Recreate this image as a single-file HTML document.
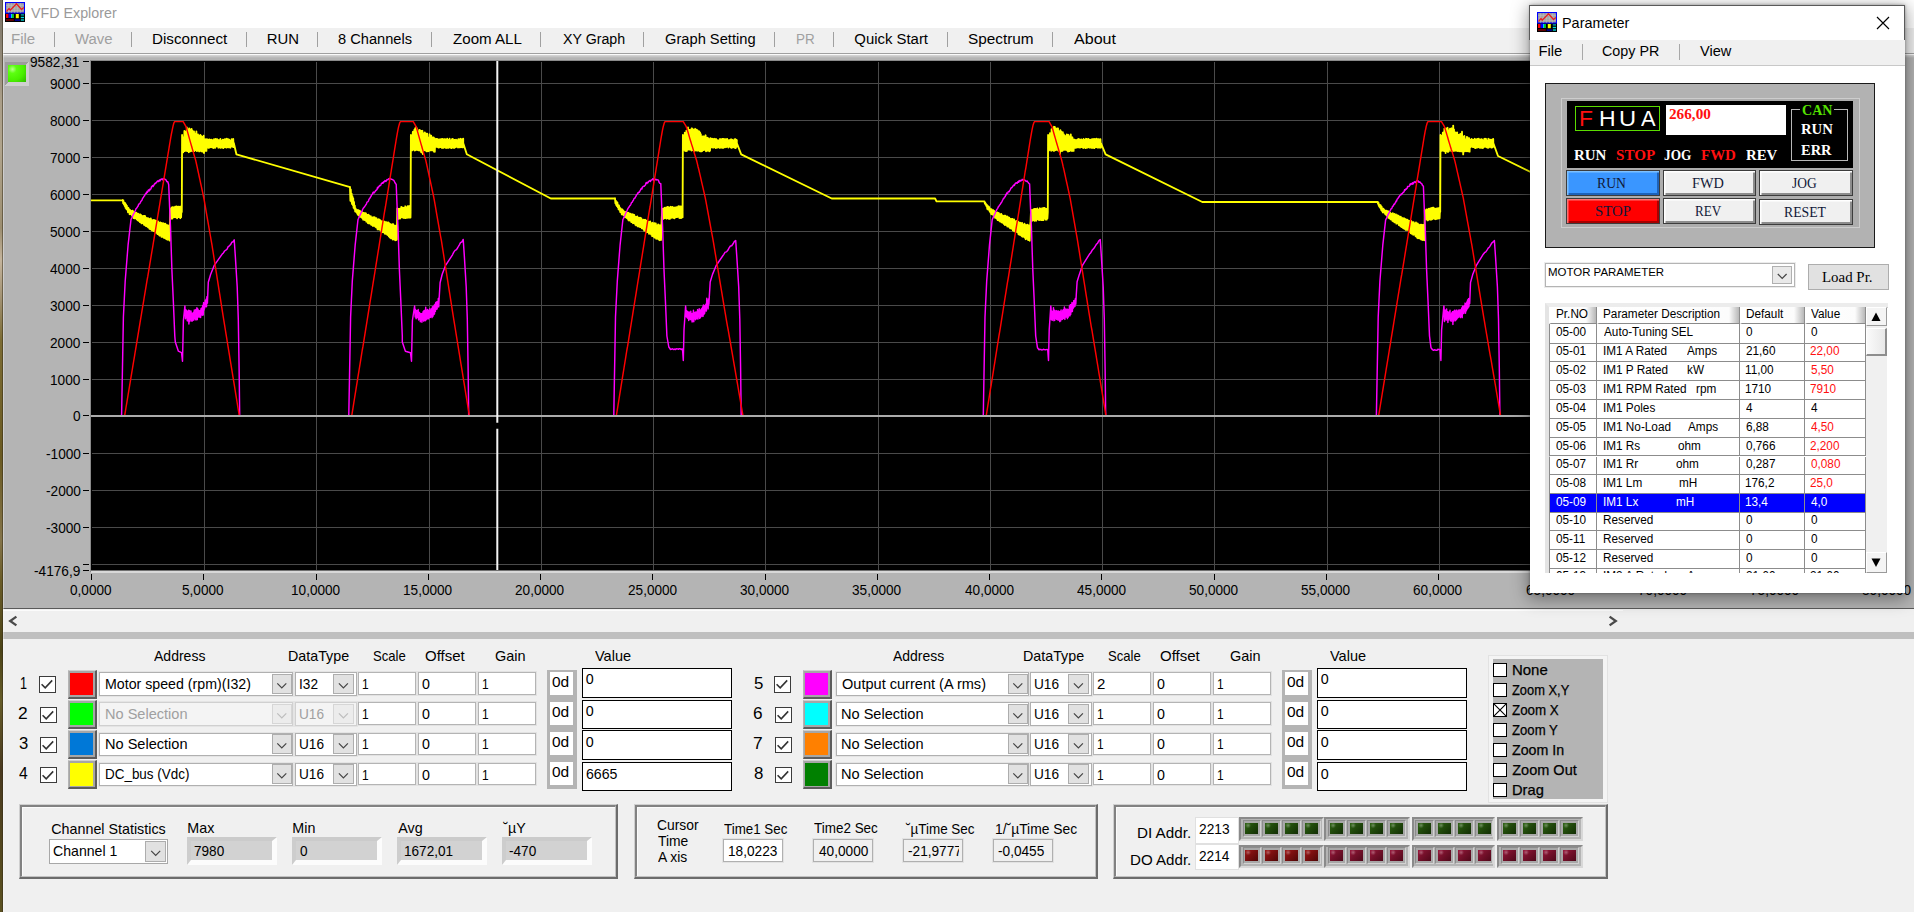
<!DOCTYPE html><html><head><meta charset="utf-8"><title>VFD Explorer</title><style>
html,body{margin:0;padding:0}
body{width:1914px;height:912px;overflow:hidden;position:relative;background:#f0f0f0;font-family:"Liberation Sans",sans-serif}
.b{position:absolute;box-sizing:border-box;display:block}
.t{position:absolute;white-space:pre;transform-origin:0 50%;display:block}
.cb{background:#fff;border:1px solid #333}
.dd{background:#e1e1e1;border:1px solid #adadad}
.fld{background:#fff;border:1px solid #b8b8b8;box-shadow:0 0 0 1px #e6e6e6}
</style></head><body>
<div class="b" style="left:0.00px;top:0.00px;width:1914.00px;height:28.00px;background:#fff"></div>
<svg class="b" style="left:5px;top:2px" width="20" height="20" viewBox="0 0 20 20"><rect width="20" height="20" fill="#000"/><rect x="0.5" y="0.5" width="19" height="10.5" fill="#a4a4a4" stroke="#0000ff" stroke-width="1.2"/><path d="M1 3.5H19M1 6H19M1 8.5H19M3.5 1V11M6.5 1V11M9.5 1V11M12.5 1V11M15.5 1V11" stroke="#c4c4c4" stroke-width="0.5" opacity="0.8"/><path d="M1.5 9.5L4 6.5L5.2 8.2L11.5 1.8L16.5 7.5L18.8 5.5" fill="none" stroke="#e82020" stroke-width="1.3"/><rect x="1" y="12" width="2.6" height="4" fill="#f00"/><rect x="3.6" y="12" width="2.4" height="4" fill="#00f"/><rect x="6" y="12" width="1.2" height="4" fill="#0cf"/><rect x="7.2" y="12" width="1.6" height="4" fill="#0e3"/><rect x="10.8" y="12" width="3" height="4.2" fill="#ff0"/><rect x="15.8" y="12.2" width="3.2" height="1.4" fill="#0aa"/><rect x="15.8" y="14.8" width="3.2" height="1.4" fill="#0dd"/><rect x="15.8" y="17.2" width="3.2" height="1.6" fill="#0bb"/><rect x="1" y="17.2" width="7.8" height="1.6" fill="#700"/><rect x="9.8" y="17.4" width="5.2" height="1.4" fill="#00a"/></svg>
<span class="t" style="left:30.50px;top:6.17px;font:normal 14.80px/14.80px 'Liberation Sans',sans-serif;color:#9a9a9a;transform:scaleX(0.9644);">VFD Explorer</span>
<div class="b" style="left:0.00px;top:28.00px;width:1914.00px;height:25.00px;background:#f0f0f0"></div>
<span class="t" style="left:10.80px;top:32.12px;font:normal 14.90px/14.90px 'Liberation Sans',sans-serif;color:#a0a0a0;transform:scaleX(1.0090);">File</span>
<span class="t" style="left:75.00px;top:32.12px;font:normal 14.90px/14.90px 'Liberation Sans',sans-serif;color:#a0a0a0;">Wave</span>
<span class="t" style="left:151.78px;top:32.12px;font:normal 14.90px/14.90px 'Liberation Sans',sans-serif;color:#000;transform:scaleX(1.0209);">Disconnect</span>
<span class="t" style="left:266.81px;top:32.12px;font:normal 14.90px/14.90px 'Liberation Sans',sans-serif;color:#000;">RUN</span>
<span class="t" style="left:338.41px;top:32.12px;font:normal 14.90px/14.90px 'Liberation Sans',sans-serif;color:#000;transform:scaleX(0.9828);">8 Channels</span>
<span class="t" style="left:452.55px;top:32.12px;font:normal 14.90px/14.90px 'Liberation Sans',sans-serif;color:#000;transform:scaleX(1.0153);">Zoom ALL</span>
<span class="t" style="left:562.72px;top:32.12px;font:normal 14.90px/14.90px 'Liberation Sans',sans-serif;color:#000;transform:scaleX(0.9543);">XY Graph</span>
<span class="t" style="left:665.27px;top:32.12px;font:normal 14.90px/14.90px 'Liberation Sans',sans-serif;color:#000;transform:scaleX(0.9857);">Graph Setting</span>
<span class="t" style="left:795.92px;top:32.12px;font:normal 14.90px/14.90px 'Liberation Sans',sans-serif;color:#a0a0a0;transform:scaleX(0.9019);">PR</span>
<span class="t" style="left:854.33px;top:32.12px;font:normal 14.90px/14.90px 'Liberation Sans',sans-serif;color:#000;">Quick Start</span>
<span class="t" style="left:968.31px;top:32.12px;font:normal 14.90px/14.90px 'Liberation Sans',sans-serif;color:#000;transform:scaleX(1.0300);">Spectrum</span>
<span class="t" style="left:1074.00px;top:32.12px;font:normal 14.90px/14.90px 'Liberation Sans',sans-serif;color:#000;transform:scaleX(1.0800);">About</span>
<div class="b" style="left:54.00px;top:31.50px;width:1.20px;height:15.00px;background:#a0a0a0"></div>
<div class="b" style="left:131.00px;top:31.50px;width:1.20px;height:15.00px;background:#a0a0a0"></div>
<div class="b" style="left:246.00px;top:31.50px;width:1.20px;height:15.00px;background:#a0a0a0"></div>
<div class="b" style="left:317.00px;top:31.50px;width:1.20px;height:15.00px;background:#a0a0a0"></div>
<div class="b" style="left:431.00px;top:31.50px;width:1.20px;height:15.00px;background:#a0a0a0"></div>
<div class="b" style="left:540.00px;top:31.50px;width:1.20px;height:15.00px;background:#a0a0a0"></div>
<div class="b" style="left:643.00px;top:31.50px;width:1.20px;height:15.00px;background:#a0a0a0"></div>
<div class="b" style="left:774.00px;top:31.50px;width:1.20px;height:15.00px;background:#a0a0a0"></div>
<div class="b" style="left:833.00px;top:31.50px;width:1.20px;height:15.00px;background:#a0a0a0"></div>
<div class="b" style="left:947.00px;top:31.50px;width:1.20px;height:15.00px;background:#a0a0a0"></div>
<div class="b" style="left:1052.00px;top:31.50px;width:1.20px;height:15.00px;background:#a0a0a0"></div>
<div class="b" style="left:0.00px;top:53.00px;width:1914.00px;height:1.00px;background:#a0a0a0"></div>
<div class="b" style="left:0.00px;top:54.00px;width:1914.00px;height:1.00px;background:#fafafa"></div>
<div class="b" style="left:0.00px;top:55.00px;width:1914.00px;height:554.00px;background:#b4b4b4"></div>
<div class="b" style="left:0.00px;top:55.00px;width:1914.00px;height:3.00px;background:linear-gradient(#d8d8d8,#b4b4b4)"></div>
<div class="b" style="left:0.00px;top:608.00px;width:1914.00px;height:1.00px;background:#5a5a5a"></div>
<div class="b" style="left:5.00px;top:62.00px;width:24.00px;height:24.00px;background:linear-gradient(135deg,#9c9c9c 0,#9c9c9c 50%,#cfcfcf 50%,#cfcfcf 100%)"></div>
<div class="b" style="left:8.00px;top:65.00px;width:18.00px;height:17.00px;background:radial-gradient(circle at 25% 25%,#b8ff90 0,#5cff10 22%,#4af000 60%,#2fb800 100%)"></div>
<svg class="b" style="left:0;top:0" width="1914" height="912" viewBox="0 0 1914 912">
<defs><clipPath id="pc"><rect x="91" y="61" width="1797" height="509"/></clipPath><clipPath id="pt"><rect x="91" y="61" width="1797" height="353.9"/></clipPath></defs>
<rect x="91" y="61" width="1797" height="509" fill="#000"/>
<g clip-path="url(#pc)" fill="none" shape-rendering="crispEdges">
<path d="M204 61V570M316 61V570M429 61V570M541 61V570M653 61V570M765 61V570M878 61V570M990 61V570M1102 61V570M1214 61V570M1327 61V570M1439 61V570M1551 61V570M1663 61V570M1776 61V570M1888 61V570M91 83H1888M91 120H1888M91 157H1888M91 194H1888M91 231H1888M91 268H1888M91 305H1888M91 342H1888M91 379H1888M91 453H1888M91 490H1888M91 527H1888M91 564H1888" stroke="#4a4a4a" stroke-width="1" transform="translate(0.5,0.5)"/>
</g>
<g clip-path="url(#pt)" fill="none" stroke-linejoin="round">
<polyline points="91.0,200.3 123.4,200.3 122.8,200.3 122.8,200.0 123.2,203.3 123.6,201.7 124.0,204.5 124.4,202.8 124.8,206.2 125.2,203.2 125.6,207.8 126.0,204.4 126.4,209.0 126.8,205.6 127.2,209.7 127.6,207.4 128.0,212.2 128.4,208.0 128.8,212.2 129.2,209.4 129.6,214.2 130.0,209.8 130.4,214.1 130.8,211.0 131.2,214.3 131.6,211.3 132.0,215.5 132.4,210.7 132.8,216.0 133.2,211.5 133.6,218.0 134.0,211.8 134.4,218.2 134.8,212.8 135.2,218.4 135.6,213.0 136.0,218.4 136.4,212.6 136.8,219.2 137.2,213.9 137.6,220.1 138.0,213.6 138.4,220.8 138.8,214.2 139.2,220.9 139.6,215.0 140.0,222.1 140.4,214.5 140.8,222.4 141.2,215.2 141.6,223.4 142.0,215.9 142.4,223.0 142.8,216.6 143.2,223.3 143.6,216.0 144.0,224.8 144.4,215.9 144.8,225.0 145.2,216.1 145.6,225.8 146.0,217.6 146.4,226.2 146.8,218.1 147.2,226.3 147.6,218.2 148.0,227.2 148.4,218.3 148.8,227.6 149.2,219.1 149.6,228.9 150.0,218.9 150.4,229.0 150.8,218.5 151.2,229.5 151.6,219.8 152.0,230.5 152.4,220.5 152.8,229.9 153.2,220.1 153.6,231.1 154.0,219.9 154.4,231.3 154.8,220.4 155.2,231.3 155.6,220.6 156.0,232.8 156.4,221.0 156.8,232.6 157.2,221.7 157.6,234.1 158.0,221.4 158.4,234.0 158.8,222.5 159.2,235.2 159.6,223.1 160.0,235.7 160.4,222.5 160.8,235.6 161.2,222.9 161.6,236.9 162.0,224.2 162.4,236.2 162.8,223.2 163.2,236.9 163.6,223.5 164.0,237.9 164.4,224.4 164.8,238.0 165.2,223.7 165.6,238.5 166.0,224.5 166.4,239.0 166.8,225.7 167.2,239.5 167.6,225.2 168.0,239.7 168.4,225.6 168.8,239.0 169.2,226.2 169.6,240.5 170.3,209.2 170.7,219.0 171.1,208.1 171.5,218.1 171.9,207.4 172.3,218.5 172.7,207.2 173.1,217.2 173.5,207.3 173.9,217.3 174.3,207.5 174.7,217.0 175.1,206.6 175.5,217.1 175.9,206.7 176.3,217.4 176.7,206.4 177.1,218.3 177.5,207.5 177.9,216.8 178.3,206.6 178.7,217.1 179.1,206.7 179.5,216.5 179.9,207.5 180.3,218.2 180.7,206.6 181.1,217.1 181.5,205.7 181.8,212.0 182.1,135.0 182.4,149.1 182.8,137.2 183.2,152.3 183.6,137.1 184.0,149.3 184.4,131.0 184.8,151.1 185.2,132.5 185.6,149.8 186.0,131.4 186.4,150.7 186.8,127.5 187.2,151.1 187.6,130.4 188.0,150.7 188.4,129.3 188.8,152.2 189.2,128.5 189.6,150.6 190.0,129.5 190.4,151.3 190.8,129.4 191.2,149.7 191.6,128.9 192.0,151.1 192.4,130.5 192.8,150.9 193.2,131.8 193.6,150.9 194.0,131.5 194.4,151.0 194.8,133.4 195.2,150.2 195.6,134.6 196.0,149.7 196.4,131.5 196.8,151.1 197.2,135.0 197.6,150.8 198.0,134.4 198.4,149.5 198.8,135.4 199.2,151.4 199.6,136.9 200.0,149.9 200.4,134.9 200.8,150.7 201.2,136.0 201.6,151.4 202.0,136.7 202.4,151.5 202.8,139.3 203.2,150.7 203.6,135.7 204.0,153.0 204.4,139.7 204.8,150.6 205.2,139.1 205.6,150.8 206.0,140.6 206.4,150.9 206.8,139.2 207.2,147.7 207.6,139.6 208.0,147.3 208.4,140.1 208.8,147.9 209.2,139.5 209.6,147.4 210.0,139.6 210.4,147.2 210.8,139.9 211.2,147.1 211.6,139.7 212.0,147.2 212.4,140.4 212.8,147.6 213.2,140.3 213.6,148.0 214.0,139.2 214.4,147.3 214.8,140.4 215.2,147.8 215.6,138.9 216.0,146.5 216.4,139.5 216.8,146.4 217.2,139.1 217.6,146.4 218.0,139.9 218.4,147.7 218.8,140.3 219.2,146.6 219.6,140.0 220.0,147.5 220.4,139.0 220.8,147.9 221.2,140.4 221.6,146.7 222.0,140.4 222.4,147.0 222.8,139.6 223.2,148.1 223.6,140.2 224.0,146.6 224.4,139.5 224.8,147.2 225.2,139.3 225.6,146.7 226.0,139.3 226.4,147.6 226.8,138.7 227.2,147.3 227.6,139.5 228.0,146.3 228.4,139.3 228.8,147.4 229.2,139.6 229.6,146.4 230.0,140.5 230.4,147.7 230.8,140.4 231.2,146.5 231.6,139.2 232.0,146.4 232.4,140.1 232.8,146.8 233.2,138.9 233.6,147.1 233.8,143.0 236.4,154.3 349.2,186.9 350.0,186.9 350.0,187.6 350.4,200.6 350.8,189.5 351.2,201.4 351.6,193.6 352.0,203.9 352.4,196.2 352.8,205.0 353.2,198.2 353.6,207.8 354.0,201.8 354.4,208.6 354.8,205.6 355.2,211.4 355.6,208.3 356.0,212.0 356.4,209.8 356.8,212.8 357.2,210.3 357.6,214.2 358.0,210.0 358.4,215.2 358.8,211.5 359.2,215.5 359.6,210.7 360.0,216.7 360.4,211.4 360.8,216.9 361.2,211.8 361.6,217.3 362.0,212.2 362.4,218.3 362.8,212.7 363.2,219.6 363.6,213.0 364.0,219.7 364.4,213.1 364.8,220.0 365.2,213.2 365.6,220.3 366.0,213.5 366.4,221.7 366.8,214.7 367.2,221.3 367.6,214.9 368.0,223.1 368.4,214.6 368.8,223.4 369.2,215.4 369.6,223.4 370.0,216.4 370.4,223.8 370.8,216.2 371.2,224.8 371.6,217.3 372.0,224.8 372.4,217.4 372.8,225.9 373.2,217.4 373.6,225.9 374.0,217.3 374.4,225.9 374.8,217.3 375.2,226.5 375.6,218.6 376.0,227.3 376.4,218.1 376.8,227.6 377.2,219.5 377.6,229.4 378.0,219.6 378.4,229.0 378.8,219.2 379.2,229.5 379.6,219.9 380.0,229.8 380.4,220.3 380.8,230.5 381.2,221.4 381.6,232.2 382.0,221.1 382.4,231.6 382.8,222.1 383.2,232.2 383.6,221.4 384.0,232.3 384.4,221.7 384.8,233.6 385.2,222.2 385.6,233.7 386.0,222.4 386.4,233.9 386.8,222.3 387.2,234.6 387.6,222.8 388.0,235.1 388.4,222.5 388.8,236.1 389.2,223.1 389.6,237.1 390.0,223.8 390.4,237.9 390.8,224.3 391.2,238.4 391.6,224.9 392.0,238.3 392.4,224.3 392.8,239.5 393.2,224.2 393.6,239.3 394.0,225.3 394.4,238.5 394.8,225.8 395.2,240.2 395.6,225.6 396.0,240.2 396.4,226.1 396.8,239.5 397.3,208.5 397.7,218.4 398.1,209.0 398.5,218.9 398.9,208.9 399.3,218.4 399.7,208.9 400.1,218.5 400.5,208.4 400.9,217.5 401.3,206.9 401.7,217.2 402.1,207.5 402.5,217.1 402.9,208.3 403.3,217.9 403.7,207.8 404.1,218.0 404.5,207.8 404.9,217.6 405.3,206.3 405.7,218.1 406.1,207.7 406.5,217.5 406.9,207.1 407.3,217.7 407.7,206.1 408.1,217.7 408.5,206.3 408.9,216.3 409.3,206.2 409.7,217.6 410.1,206.0 410.5,217.5 410.6,212.0 410.9,135.0 411.2,141.9 411.6,149.7 412.0,137.3 412.4,150.3 412.8,131.9 413.2,149.5 413.6,131.4 414.0,149.0 414.4,129.7 414.8,150.5 415.2,128.3 415.6,150.0 416.0,127.2 416.4,149.5 416.8,128.1 417.2,150.1 417.6,131.5 418.0,149.7 418.4,131.7 418.8,150.4 419.2,130.0 419.6,149.5 420.0,130.2 420.4,150.7 420.8,132.3 421.2,152.3 421.6,131.0 422.0,149.9 422.4,130.8 422.8,154.1 423.2,133.1 423.6,149.6 424.0,133.4 424.4,150.0 424.8,132.5 425.2,150.6 425.6,133.2 426.0,149.5 426.4,135.6 426.8,151.4 427.2,133.6 427.6,149.9 428.0,137.3 428.4,151.2 428.8,137.7 429.2,150.7 429.6,134.3 430.0,150.5 430.4,137.6 430.8,149.7 431.2,135.7 431.6,150.3 432.0,139.0 432.4,150.2 432.8,137.5 433.2,150.5 433.6,137.4 434.0,151.6 434.4,138.1 434.8,151.8 435.2,139.0 435.6,146.6 436.0,138.9 436.4,146.9 436.8,138.9 437.2,146.7 437.6,139.2 438.0,147.3 438.4,140.3 438.8,147.6 439.2,139.4 439.6,147.0 440.0,139.6 440.4,147.0 440.8,139.3 441.2,146.4 441.6,139.2 442.0,148.0 442.4,138.9 442.8,147.2 443.2,139.8 443.6,147.9 444.0,139.1 444.4,146.8 444.8,139.1 445.2,147.0 445.6,139.5 446.0,148.0 446.4,140.2 446.8,147.9 447.2,138.7 447.6,146.4 448.0,140.0 448.4,147.9 448.8,139.6 449.2,147.4 449.6,138.7 450.0,147.0 450.4,140.4 450.8,147.8 451.2,140.2 451.6,148.1 452.0,139.1 452.4,146.5 452.8,139.0 453.2,147.2 453.6,139.9 454.0,148.0 454.4,140.0 454.8,147.5 455.2,140.1 455.6,147.1 456.0,139.7 456.4,146.4 456.8,140.1 457.2,146.7 457.6,140.4 458.0,147.5 458.4,139.2 458.8,146.5 459.2,139.2 459.6,147.4 460.0,140.0 460.4,146.5 460.8,138.8 461.2,147.2 461.6,139.7 462.0,147.0 462.4,139.1 462.8,147.4 463.2,138.7 463.2,143.0 466.8,154.3 550.8,198.5 614.2,198.5 615.0,198.5 615.0,198.2 615.4,203.3 615.8,200.7 616.2,205.0 616.6,202.0 617.0,206.1 617.4,202.5 617.8,207.1 618.2,205.1 618.6,209.3 619.0,205.5 619.4,209.6 619.8,207.3 620.2,212.0 620.6,208.5 621.0,212.4 621.4,209.5 621.8,214.3 622.2,209.3 622.6,213.6 623.0,210.1 623.4,215.1 623.8,211.2 624.2,215.5 624.6,211.9 625.0,217.2 625.4,211.9 625.8,217.1 626.2,213.1 626.6,217.9 627.0,213.2 627.4,218.3 627.8,212.6 628.2,219.7 628.6,213.0 629.0,220.5 629.4,213.7 629.8,219.8 630.2,213.6 630.6,220.7 631.0,214.6 631.4,222.1 631.8,214.1 632.2,221.8 632.6,214.5 633.0,223.2 633.4,214.7 633.8,222.3 634.2,214.9 634.6,223.4 635.0,216.6 635.4,224.7 635.8,216.7 636.2,225.4 636.6,217.3 637.0,224.9 637.4,216.5 637.8,226.4 638.2,217.7 638.6,225.5 639.0,217.9 639.4,226.6 639.8,217.8 640.2,227.1 640.6,217.8 641.0,227.1 641.4,218.4 641.8,228.2 642.2,219.8 642.6,228.4 643.0,220.2 643.4,229.0 643.8,219.6 644.2,230.6 644.6,220.6 645.0,230.5 645.4,219.8 645.8,231.1 646.2,220.6 646.6,232.3 647.0,220.7 647.4,232.0 647.8,222.1 648.2,232.0 648.6,221.6 649.0,233.8 649.4,222.4 649.8,233.1 650.2,221.5 650.6,233.7 651.0,223.2 651.4,234.6 651.8,223.2 652.2,236.2 652.6,222.8 653.0,235.7 653.4,224.1 653.8,236.8 654.2,223.2 654.6,237.6 655.0,223.6 655.4,237.4 655.8,223.4 656.2,238.7 656.6,225.1 657.0,238.8 657.4,225.4 657.8,238.1 658.2,224.5 658.6,239.1 659.0,225.9 659.4,240.2 659.8,225.2 660.2,239.3 660.6,225.4 661.0,240.0 661.4,226.4 661.8,217.8 662.2,209.0 662.6,218.9 663.0,209.0 663.4,218.9 663.8,208.5 664.2,218.0 664.6,207.8 665.0,218.0 665.4,208.7 665.8,217.4 666.2,207.4 666.6,218.6 667.0,207.5 667.4,217.2 667.8,207.0 668.2,218.1 668.6,207.5 669.0,218.9 669.4,208.5 669.8,218.9 670.2,207.2 670.6,217.0 671.0,206.8 671.4,217.8 671.8,207.9 672.2,217.6 672.6,206.9 673.0,217.5 673.4,207.6 673.8,218.0 674.2,207.8 674.6,218.3 675.0,207.5 675.4,216.8 675.8,207.8 676.2,217.0 676.6,207.2 677.0,217.1 677.4,207.5 677.8,216.7 678.2,206.4 678.6,216.8 679.0,206.1 679.4,218.0 679.8,206.9 680.2,216.8 680.6,206.5 681.0,218.1 681.4,206.6 681.8,216.5 682.2,207.2 682.6,217.3 682.6,212.0 682.9,135.0 683.2,142.3 683.6,149.9 684.0,138.7 684.4,149.0 684.8,132.6 685.2,151.0 685.6,134.9 686.0,150.8 686.4,130.6 686.8,151.0 687.2,130.8 687.6,149.5 688.0,127.4 688.4,149.6 688.8,129.6 689.2,149.1 689.6,129.9 690.0,149.8 690.4,130.7 690.8,149.3 691.2,129.1 691.6,150.5 692.0,128.3 692.4,150.0 692.8,129.1 693.2,149.9 693.6,129.6 694.0,151.0 694.4,130.0 694.8,150.8 695.2,128.8 695.6,150.2 696.0,131.1 696.4,150.3 696.8,129.7 697.2,150.7 697.6,130.5 698.0,150.1 698.4,131.2 698.8,150.5 699.2,131.4 699.6,151.1 700.0,132.3 700.4,151.4 700.8,134.1 701.2,151.4 701.6,136.5 702.0,151.2 702.4,136.5 702.8,150.3 703.2,137.2 703.6,150.0 704.0,136.3 704.4,149.8 704.8,137.7 705.2,149.6 705.6,135.3 706.0,151.3 706.4,138.0 706.8,150.9 707.2,137.7 707.6,150.5 708.0,138.2 708.4,149.7 708.8,138.8 709.2,151.3 709.6,139.1 710.0,150.7 710.4,138.1 710.8,146.5 711.2,139.5 711.6,147.2 712.0,138.8 712.4,147.4 712.8,138.8 713.2,147.6 713.6,140.1 714.0,147.2 714.4,138.8 714.8,147.2 715.2,139.4 715.6,148.0 716.0,138.9 716.4,147.8 716.8,140.5 717.2,147.6 717.6,140.2 718.0,146.6 718.4,140.5 718.8,147.2 719.2,140.4 719.6,147.9 720.0,139.0 720.4,147.7 720.8,140.4 721.2,146.4 721.6,139.3 722.0,147.7 722.4,139.0 722.8,147.9 723.2,139.2 723.6,147.8 724.0,139.0 724.4,147.2 724.8,140.4 725.2,146.7 725.6,139.2 726.0,147.2 726.4,139.3 726.8,146.4 727.2,139.0 727.6,146.6 728.0,140.4 728.4,147.5 728.8,140.3 729.2,146.6 729.6,140.1 730.0,146.5 730.4,139.7 730.8,147.4 731.2,139.3 731.6,147.9 732.0,139.7 732.4,147.3 732.8,140.3 733.2,146.5 733.6,140.5 734.0,147.4 734.4,139.4 734.8,147.7 735.2,139.2 735.6,148.1 736.0,139.7 736.4,146.9 736.8,140.1 736.8,143.0 741.2,154.3 831.7,198.5 935.1,198.5 936.5,201.4 983.3,201.4 984.5,201.4 984.5,201.3 984.9,203.7 985.3,202.9 985.7,204.8 986.1,204.1 986.5,206.4 986.9,204.9 987.3,208.8 987.7,205.9 988.1,209.6 988.5,206.5 988.9,209.9 989.3,207.2 989.7,211.4 990.1,209.0 990.5,212.7 990.9,209.3 991.3,214.3 991.7,209.3 992.1,214.1 992.5,210.7 992.9,214.6 993.3,210.2 993.7,215.9 994.1,210.9 994.5,216.7 994.9,211.6 995.3,217.9 995.7,212.6 996.1,217.8 996.5,213.0 996.9,218.8 997.3,212.5 997.7,220.1 998.1,213.0 998.5,219.4 998.9,213.1 999.3,220.7 999.7,214.7 1000.1,221.5 1000.5,214.3 1000.9,221.2 1001.3,214.0 1001.7,222.4 1002.1,215.2 1002.5,222.4 1002.9,215.7 1003.3,223.1 1003.7,216.5 1004.1,224.1 1004.5,215.7 1004.9,225.0 1005.3,215.7 1005.7,224.9 1006.1,216.6 1006.5,225.0 1006.9,216.4 1007.3,226.4 1007.7,216.7 1008.1,226.6 1008.5,218.5 1008.9,226.5 1009.3,217.7 1009.7,227.8 1010.1,218.6 1010.5,228.4 1010.9,219.4 1011.3,228.2 1011.7,219.0 1012.1,228.9 1012.5,218.9 1012.9,230.4 1013.3,220.4 1013.7,230.7 1014.1,219.5 1014.5,231.4 1014.9,221.1 1015.3,231.4 1015.7,221.4 1016.1,231.9 1016.5,220.9 1016.9,231.9 1017.3,221.2 1017.7,232.4 1018.1,221.7 1018.5,234.1 1018.9,222.5 1019.3,234.8 1019.7,222.8 1020.1,234.4 1020.5,222.8 1020.9,235.3 1021.3,223.5 1021.7,236.0 1022.1,222.9 1022.5,236.7 1022.9,224.3 1023.3,236.6 1023.7,224.4 1024.1,236.9 1024.5,223.7 1024.9,237.8 1025.3,224.8 1025.7,239.2 1026.1,225.0 1026.5,238.5 1026.9,225.5 1027.3,238.8 1027.7,224.7 1028.1,240.0 1028.5,225.5 1028.9,240.0 1029.3,225.8 1029.7,240.7 1030.1,225.7 1030.6,221.0 1031.0,210.6 1031.4,220.9 1031.8,210.0 1032.2,220.6 1032.6,210.2 1033.0,219.7 1033.4,209.4 1033.8,220.2 1034.2,209.0 1034.6,220.8 1035.0,209.1 1035.4,218.9 1035.8,208.9 1036.2,220.7 1036.6,209.3 1037.0,219.0 1037.4,208.5 1037.8,218.7 1038.2,209.8 1038.6,219.9 1039.0,209.7 1039.4,220.0 1039.8,208.3 1040.2,219.6 1040.6,208.8 1041.0,220.0 1041.4,209.7 1041.8,220.1 1042.2,208.1 1042.6,220.0 1043.0,209.7 1043.4,220.1 1043.8,208.0 1044.2,218.5 1044.6,207.9 1045.0,218.1 1045.4,209.3 1045.8,219.6 1046.2,208.8 1046.6,219.6 1047.0,208.7 1047.4,218.4 1047.8,212.0 1048.1,135.0 1048.4,138.1 1048.8,150.5 1049.2,136.1 1049.6,149.0 1050.0,133.1 1050.4,149.8 1050.8,134.7 1051.2,150.8 1051.6,129.1 1052.0,149.9 1052.4,129.1 1052.8,150.2 1053.2,130.4 1053.6,150.8 1054.0,126.8 1054.4,150.7 1054.8,127.0 1055.2,150.2 1055.6,128.1 1056.0,149.9 1056.4,128.7 1056.8,149.8 1057.2,130.9 1057.6,149.4 1058.0,128.3 1058.4,150.7 1058.8,131.2 1059.2,150.1 1059.6,132.8 1060.0,154.1 1060.4,130.2 1060.8,151.2 1061.2,131.4 1061.6,149.8 1062.0,132.6 1062.4,150.9 1062.8,132.2 1063.2,149.7 1063.6,134.1 1064.0,149.8 1064.4,135.2 1064.8,149.7 1065.2,136.2 1065.6,149.8 1066.0,135.9 1066.4,149.8 1066.8,134.4 1067.2,150.6 1067.6,135.3 1068.0,151.6 1068.4,134.8 1068.8,149.8 1069.2,139.3 1069.6,151.1 1070.0,136.2 1070.4,149.8 1070.8,134.5 1071.2,150.5 1071.6,139.4 1072.0,151.0 1072.4,137.3 1072.8,150.5 1073.2,141.2 1073.6,150.9 1074.0,139.5 1074.4,146.7 1074.8,140.0 1075.2,147.9 1075.6,140.1 1076.0,147.6 1076.4,140.2 1076.8,147.5 1077.2,139.9 1077.6,147.1 1078.0,139.3 1078.4,147.4 1078.8,138.9 1079.2,147.1 1079.6,140.1 1080.0,147.6 1080.4,139.8 1080.8,146.8 1081.2,139.5 1081.6,147.1 1082.0,139.8 1082.4,147.0 1082.8,139.9 1083.2,148.0 1083.6,139.0 1084.0,147.5 1084.4,140.1 1084.8,147.0 1085.2,139.6 1085.6,148.1 1086.0,138.8 1086.4,147.3 1086.8,139.0 1087.2,147.7 1087.6,140.4 1088.0,147.2 1088.4,138.9 1088.8,147.3 1089.2,139.7 1089.6,147.6 1090.0,139.6 1090.4,147.5 1090.8,140.2 1091.2,147.2 1091.6,139.4 1092.0,148.0 1092.4,139.1 1092.8,147.5 1093.2,139.4 1093.6,147.7 1094.0,138.9 1094.4,148.1 1094.8,139.3 1095.2,146.4 1095.6,139.2 1096.0,147.0 1096.4,138.7 1096.8,147.1 1097.2,139.5 1097.6,147.6 1098.0,139.3 1098.4,146.8 1098.8,139.1 1099.2,147.6 1099.6,140.4 1100.0,147.2 1100.4,139.1 1100.8,147.7 1100.9,143.0 1105.6,154.3 1202.3,202.0 1376.7,202.0 1377.6,202.0 1377.6,201.8 1378.0,203.9 1378.4,202.4 1378.8,206.0 1379.2,204.5 1379.6,207.0 1380.0,204.9 1380.4,208.2 1380.8,205.5 1381.2,210.0 1381.6,206.7 1382.0,210.8 1382.4,208.4 1382.8,212.3 1383.2,208.7 1383.6,212.4 1384.0,209.3 1384.4,212.9 1384.8,210.3 1385.2,214.1 1385.6,210.8 1386.0,214.7 1386.4,210.6 1386.8,215.5 1387.2,211.2 1387.6,216.2 1388.0,211.1 1388.4,217.9 1388.8,212.0 1389.2,217.7 1389.6,212.3 1390.0,218.6 1390.4,212.9 1390.8,219.4 1391.2,213.6 1391.6,219.5 1392.0,214.3 1392.4,220.8 1392.8,213.2 1393.2,221.3 1393.6,214.9 1394.0,221.8 1394.4,214.0 1394.8,222.4 1395.2,215.1 1395.6,221.6 1396.0,214.5 1396.4,223.6 1396.8,215.8 1397.2,223.1 1397.6,215.3 1398.0,223.4 1398.4,215.8 1398.8,225.0 1399.2,216.3 1399.6,224.5 1400.0,217.5 1400.4,226.1 1400.8,216.7 1401.2,226.8 1401.6,217.8 1402.0,227.1 1402.4,218.2 1402.8,227.8 1403.2,218.7 1403.6,228.3 1404.0,218.1 1404.4,228.6 1404.8,219.0 1405.2,229.2 1405.6,219.2 1406.0,230.0 1406.4,219.8 1406.8,229.5 1407.2,219.6 1407.6,229.8 1408.0,220.4 1408.4,230.2 1408.8,220.7 1409.2,230.9 1409.6,221.1 1410.0,232.0 1410.4,221.5 1410.8,233.1 1411.2,220.9 1411.6,233.7 1412.0,221.9 1412.4,233.8 1412.8,222.4 1413.2,234.8 1413.6,222.2 1414.0,234.6 1414.4,223.5 1414.8,234.6 1415.2,223.2 1415.6,236.1 1416.0,222.5 1416.4,236.6 1416.8,223.8 1417.2,237.7 1417.6,223.5 1418.0,238.3 1418.4,224.1 1418.8,238.1 1419.2,224.9 1419.6,237.7 1420.0,224.9 1420.4,238.9 1420.8,224.6 1421.2,239.6 1421.6,224.8 1422.0,239.3 1422.4,225.3 1422.8,240.0 1423.2,225.0 1423.6,239.7 1424.0,225.5 1424.4,240.2 1424.8,210.3 1425.2,219.2 1425.6,210.2 1426.0,219.4 1426.4,209.5 1426.8,219.0 1427.2,209.4 1427.6,220.4 1428.0,209.6 1428.4,219.9 1428.8,208.8 1429.2,218.9 1429.6,208.6 1430.0,219.3 1430.4,209.2 1430.8,219.7 1431.2,207.9 1431.6,219.5 1432.0,209.5 1432.4,219.0 1432.8,207.7 1433.2,218.5 1433.6,207.6 1434.0,218.2 1434.4,209.3 1434.8,218.9 1435.2,208.7 1435.6,219.2 1436.0,209.1 1436.4,218.8 1436.8,208.4 1437.2,218.7 1437.6,208.4 1438.0,218.6 1438.4,208.3 1438.8,217.8 1439.2,208.2 1439.6,218.2 1440.0,208.3 1440.2,212.0 1440.5,135.0 1440.8,149.1 1441.2,136.8 1441.6,150.9 1442.0,135.6 1442.4,150.6 1442.8,132.8 1443.2,149.9 1443.6,132.3 1444.0,151.0 1444.4,128.7 1444.8,149.3 1445.2,130.5 1445.6,153.0 1446.0,128.4 1446.4,151.0 1446.8,128.8 1447.2,149.3 1447.6,127.8 1448.0,152.1 1448.4,130.2 1448.8,151.2 1449.2,131.2 1449.6,149.2 1450.0,128.6 1450.4,149.6 1450.8,131.2 1451.2,151.0 1451.6,128.3 1452.0,150.7 1452.4,132.4 1452.8,151.3 1453.2,125.6 1453.6,150.6 1454.0,129.4 1454.4,150.8 1454.8,133.3 1455.2,149.4 1455.6,132.4 1456.0,150.7 1456.4,133.8 1456.8,150.7 1457.2,132.5 1457.6,151.0 1458.0,134.6 1458.4,150.0 1458.8,135.9 1459.2,151.2 1459.6,134.7 1460.0,151.2 1460.4,133.8 1460.8,151.3 1461.2,136.0 1461.6,151.4 1462.0,131.7 1462.4,150.1 1462.8,136.5 1463.2,154.4 1463.6,138.1 1464.0,151.4 1464.4,136.0 1464.8,151.3 1465.2,139.3 1465.6,149.8 1466.0,139.2 1466.4,151.2 1466.8,137.0 1467.2,151.1 1467.6,137.3 1468.0,151.2 1468.4,138.9 1468.8,151.4 1469.2,138.2 1469.6,151.6 1470.0,139.6 1470.4,147.2 1470.8,139.8 1471.2,146.6 1471.6,139.0 1472.0,146.6 1472.4,140.0 1472.8,147.0 1473.2,139.7 1473.6,147.0 1474.0,139.6 1474.4,146.6 1474.8,138.8 1475.2,148.1 1475.6,139.4 1476.0,146.5 1476.4,139.8 1476.8,147.7 1477.2,139.0 1477.6,147.4 1478.0,139.3 1478.4,147.2 1478.8,138.7 1479.2,146.4 1479.6,140.5 1480.0,147.9 1480.4,139.6 1480.8,147.3 1481.2,139.2 1481.6,147.7 1482.0,139.5 1482.4,148.0 1482.8,140.1 1483.2,147.8 1483.6,140.4 1484.0,146.8 1484.4,138.8 1484.8,146.7 1485.2,139.0 1485.6,146.5 1486.0,138.8 1486.4,147.3 1486.8,140.3 1487.2,147.1 1487.6,140.4 1488.0,147.9 1488.4,138.8 1488.8,147.4 1489.2,139.4 1489.6,146.5 1490.0,140.4 1490.4,146.8 1490.8,139.7 1491.2,147.5 1491.6,140.4 1492.0,147.5 1492.4,139.4 1492.8,147.1 1493.2,139.0 1493.3,143.0 1498.0,156.0 1560.0,186.5 1620.0,202.0 1760.0,202.0" stroke="#ffff00" stroke-width="1.85"/>
<polyline points="91.0,416.0 120.6,416.0 121.6,415.0 123.4,317.0 125.2,281.0 128.1,244.8 131.0,219.5 131.5,218.5 132.0,217.5 132.5,216.2 133.0,215.1 133.5,214.1 134.0,213.1 134.5,212.3 135.0,211.2 135.5,210.1 136.0,208.7 136.5,208.4 137.0,207.6 137.5,206.8 138.0,206.3 138.5,204.7 139.0,204.0 139.5,203.9 140.0,203.3 140.5,202.3 141.0,201.1 141.5,200.7 142.0,200.1 142.5,198.5 143.0,198.0 143.5,197.1 144.0,196.1 144.5,195.9 145.0,194.6 145.5,194.0 146.0,193.0 146.5,193.4 147.0,191.6 147.5,192.3 148.0,190.8 148.5,190.0 149.0,191.0 149.5,189.2 150.0,189.9 150.5,189.2 151.0,188.7 151.5,186.8 152.0,186.8 152.5,185.6 153.0,186.5 153.5,185.8 154.0,184.9 154.5,184.0 155.0,183.3 155.5,183.6 156.0,182.7 156.5,182.6 157.0,181.5 157.5,181.3 158.0,180.7 158.5,181.6 159.0,181.0 159.5,179.9 160.0,180.9 160.5,179.5 161.0,179.6 161.5,179.0 162.0,179.0 162.5,179.8 163.0,178.7 164.2,178.5 165.1,179.4 166.0,179.9 166.9,181.8 167.8,181.8 168.7,184.7 169.7,208.9 170.5,226.7 171.9,270.0 173.4,302.7 174.8,336.0 175.3,342.0 178.4,351.2 181.5,352.7 182.5,361.2 183.4,320.5 184.9,306.0 185.1,310.7 185.5,318.7 185.9,309.7 186.4,317.6 186.8,310.6 187.2,320.8 187.6,312.1 188.0,320.9 188.5,310.3 188.9,324.1 189.3,310.5 189.7,321.5 190.1,310.9 190.6,319.6 191.0,310.9 191.4,320.9 191.8,313.3 192.2,321.1 192.7,313.3 193.1,320.3 193.5,312.3 193.9,320.0 194.3,310.1 194.8,318.2 195.2,310.1 195.6,319.7 196.0,309.5 196.4,319.7 196.9,307.8 197.3,319.6 197.7,308.7 198.1,316.8 198.5,310.2 199.0,317.1 199.4,311.1 199.8,317.0 200.2,310.4 200.6,317.5 201.1,308.5 201.5,314.7 201.9,308.1 202.3,315.3 202.7,305.4 203.2,315.1 203.6,302.6 204.0,309.9 204.4,303.4 204.8,307.9 205.3,300.4 205.7,306.2 206.1,299.2 206.5,306.8 206.9,296.7 207.4,303.1 208.3,282.2 210.6,274.5 214.4,265.1 222.2,254.1 223.4,252.9 224.6,251.0 225.8,250.2 227.0,249.2 228.2,246.6 229.4,245.8 230.6,244.6 231.8,242.2 233.0,241.8 234.2,239.8 235.3,255.8 237.2,286.8 238.3,319.0 239.1,368.0 239.7,416.0 347.8,416.0 348.8,415.0 350.6,317.0 352.3,281.0 355.2,244.8 358.0,219.5 358.5,218.5 359.0,217.3 359.5,216.3 360.0,215.3 360.5,214.1 361.0,213.0 361.5,212.2 362.0,211.0 362.5,209.7 363.0,208.7 363.5,208.0 364.0,207.3 364.5,206.9 365.0,206.0 365.5,205.4 366.0,204.5 366.5,203.8 367.0,202.1 367.5,201.9 368.0,201.6 368.5,200.8 369.0,199.2 369.5,198.6 370.0,198.1 370.5,197.0 371.0,196.4 371.5,194.9 372.0,194.7 372.5,194.0 373.0,192.5 373.5,192.1 374.0,193.0 374.5,192.1 375.0,191.8 375.5,190.7 376.0,190.5 376.5,190.0 377.0,189.5 377.5,187.4 378.0,187.9 378.5,186.7 379.0,186.8 379.5,185.5 380.0,185.4 380.5,185.6 381.0,184.5 381.5,183.2 382.0,183.2 382.5,182.7 383.0,183.3 383.5,181.8 384.0,181.5 384.5,181.8 385.0,180.6 385.5,181.1 386.0,181.4 386.5,180.3 387.0,179.6 387.5,179.8 388.0,179.7 388.5,178.8 389.0,178.6 389.5,178.4 390.5,178.7 391.3,179.2 392.1,179.4 392.9,179.8 393.8,180.3 394.6,181.9 395.4,183.4 396.2,184.2 397.2,209.0 398.0,226.7 399.4,270.0 400.9,302.7 402.3,336.0 402.3,342.0 405.4,351.2 410.5,352.7 411.5,361.2 412.4,320.5 414.6,306.0 414.8,308.8 415.2,316.9 415.6,309.6 416.1,318.8 416.5,310.7 416.9,317.8 417.3,310.8 417.7,317.5 418.2,309.5 418.6,319.9 419.0,312.1 419.4,319.3 419.8,313.0 420.3,321.8 420.7,313.8 421.1,320.7 421.5,313.8 421.9,322.2 422.4,313.3 422.8,319.7 423.2,311.4 423.6,321.1 424.0,310.7 424.5,320.5 424.9,310.2 425.3,320.8 425.7,307.2 426.1,319.9 426.6,310.7 427.0,318.9 427.4,309.4 427.8,318.7 428.2,310.3 428.7,318.8 429.1,310.2 429.5,317.3 429.9,308.6 430.3,317.4 430.8,310.4 431.2,315.9 431.6,308.7 432.0,317.6 432.4,306.7 432.9,316.5 433.3,306.9 433.7,314.7 434.1,305.3 434.5,314.0 435.0,304.2 435.4,311.4 435.8,302.4 436.2,309.4 436.6,302.0 437.1,309.0 437.5,301.4 437.9,306.6 438.3,298.5 438.7,306.9 439.2,297.5 440.1,282.7 442.2,274.3 445.6,265.3 452.5,254.8 453.8,252.1 455.1,250.4 456.5,249.6 457.8,247.5 459.2,245.1 460.5,242.6 461.9,241.9 463.2,239.4 464.3,255.4 466.2,286.8 467.3,319.0 468.1,368.0 468.7,416.0 612.8,416.0 613.8,415.0 615.5,317.0 617.3,281.0 620.1,244.8 622.9,219.5 623.4,218.5 623.9,217.4 624.4,216.4 624.9,215.3 625.4,214.0 625.9,212.8 626.4,211.8 626.9,210.8 627.4,209.7 627.9,208.6 628.4,207.8 628.9,207.3 629.4,206.5 629.9,205.5 630.4,205.3 630.9,204.2 631.4,202.8 631.9,202.4 632.4,202.0 632.9,200.7 633.4,200.4 633.9,198.7 634.4,198.3 634.9,198.2 635.4,197.1 635.9,196.4 636.4,194.9 636.9,194.6 637.4,193.9 637.9,192.8 638.4,192.9 638.9,192.1 639.4,192.3 639.9,191.0 640.4,190.1 640.9,189.0 641.4,188.5 641.9,189.0 642.4,187.3 642.9,186.7 643.4,186.3 643.9,186.3 644.4,186.3 644.9,185.3 645.4,185.1 645.9,183.2 646.4,182.5 646.9,183.5 647.4,182.3 647.9,182.7 648.4,181.8 648.9,181.1 649.4,181.0 649.9,180.4 650.4,181.5 650.9,180.6 651.4,179.9 651.9,179.8 652.4,179.5 652.9,178.7 653.4,180.0 653.9,179.3 655.1,179.8 655.9,179.2 656.7,179.9 657.5,179.8 658.4,180.2 659.2,182.5 660.0,183.4 660.8,183.7 661.8,209.0 662.6,226.7 664.0,270.0 665.5,302.7 666.9,336.0 668.8,347.0 670.3,349.0 670.3,349.5 671.2,349.4 672.1,348.8 673.0,349.1 673.9,349.6 674.8,349.0 675.7,349.5 676.6,348.7 677.5,348.9 678.4,349.3 679.3,348.7 680.2,348.8 681.1,349.5 682.0,349.0 682.5,349.0 683.3,360.5 684.0,330.0 685.6,306.0 685.8,307.9 686.2,316.8 686.6,310.7 687.1,317.7 687.5,311.4 687.9,318.5 688.3,312.1 688.7,320.5 689.2,311.9 689.6,319.0 690.0,313.1 690.4,319.6 690.8,311.2 691.3,319.8 691.7,313.7 692.1,322.0 692.5,313.5 692.9,321.3 693.4,310.3 693.8,321.7 694.2,312.6 694.6,318.5 695.0,312.2 695.5,319.8 695.9,312.0 696.3,318.1 696.7,312.1 697.1,318.9 697.6,309.6 698.0,319.0 698.4,310.9 698.8,316.7 699.2,308.8 699.7,318.4 700.1,309.5 700.5,317.5 700.9,310.9 701.3,316.2 701.8,308.4 702.2,316.1 702.6,307.1 703.0,316.4 703.4,305.0 703.9,314.5 704.3,306.1 704.7,313.2 705.1,305.2 705.5,310.8 706.0,304.0 706.4,311.1 706.8,298.3 707.2,306.8 707.6,301.0 708.1,308.9 708.5,299.1 708.9,304.2 709.3,296.8 710.2,282.0 712.5,274.4 716.2,265.5 723.8,254.3 725.2,252.1 726.5,251.9 727.8,250.3 729.1,247.9 730.4,246.0 731.7,245.7 733.1,243.8 734.4,241.3 735.7,240.5 736.8,256.5 738.7,286.8 739.8,319.0 740.6,368.0 741.2,416.0 982.3,416.0 983.3,415.0 985.0,317.0 986.7,281.1 989.5,244.9 992.2,219.7 992.7,218.5 993.2,217.4 993.7,216.4 994.2,215.1 994.7,214.3 995.2,213.1 995.7,211.7 996.2,210.9 996.7,209.6 997.2,209.0 997.7,208.3 998.2,207.1 998.7,206.1 999.2,206.1 999.7,204.8 1000.2,204.5 1000.7,203.5 1001.2,202.7 1001.7,202.1 1002.2,201.0 1002.7,200.0 1003.2,198.7 1003.7,198.8 1004.2,197.6 1004.7,196.9 1005.2,196.8 1005.7,194.7 1006.2,194.9 1006.7,193.0 1007.2,193.5 1007.7,193.2 1008.2,191.6 1008.7,191.5 1009.2,191.7 1009.7,190.5 1010.2,189.8 1010.7,188.7 1011.2,187.8 1011.7,187.7 1012.2,187.2 1012.7,186.3 1013.2,185.9 1013.7,185.0 1014.2,185.5 1014.7,184.8 1015.2,183.5 1015.7,183.0 1016.2,183.2 1016.7,182.8 1017.2,183.3 1017.7,182.0 1018.2,181.5 1018.7,182.3 1019.2,180.6 1019.7,181.1 1020.2,180.3 1020.7,181.0 1021.2,180.4 1021.7,180.5 1022.2,179.3 1022.7,180.0 1023.8,179.8 1024.7,179.9 1025.5,180.7 1026.3,181.4 1027.1,180.9 1027.9,182.1 1028.8,183.2 1029.6,184.1 1030.6,209.6 1031.4,226.7 1032.8,270.0 1034.3,302.7 1035.7,336.0 1037.5,347.8 1039.0,349.8 1039.0,349.3 1039.9,349.5 1040.8,349.4 1041.7,350.0 1042.6,349.7 1043.5,349.3 1044.4,349.6 1045.3,349.8 1046.2,349.6 1047.1,349.4 1047.7,349.8 1048.5,360.5 1049.2,330.0 1050.8,306.0 1051.0,308.1 1051.4,319.8 1051.8,311.0 1052.3,320.2 1052.7,311.4 1053.1,318.6 1053.5,307.7 1053.9,320.7 1054.4,310.3 1054.8,320.2 1055.2,312.2 1055.6,318.3 1056.0,310.5 1056.5,319.3 1056.9,310.9 1057.3,319.6 1057.7,311.2 1058.1,320.1 1058.6,311.0 1059.0,319.9 1059.4,312.4 1059.8,321.6 1060.2,311.4 1060.7,320.9 1061.1,309.9 1061.5,319.4 1061.9,312.3 1062.3,319.4 1062.8,310.2 1063.2,318.6 1063.6,309.5 1064.0,318.3 1064.4,307.0 1064.9,319.4 1065.3,309.0 1065.7,317.1 1066.1,309.7 1066.5,317.0 1067.0,308.9 1067.4,318.6 1067.8,309.9 1068.2,317.2 1068.6,309.6 1069.1,315.2 1069.5,305.9 1069.9,315.9 1070.3,304.8 1070.7,314.5 1071.2,304.6 1071.6,311.7 1072.0,302.6 1072.4,311.5 1072.8,303.2 1073.3,308.1 1073.7,300.8 1074.1,306.9 1074.5,300.4 1074.9,306.5 1075.4,298.4 1075.8,304.1 1076.2,296.0 1077.1,281.8 1079.2,274.9 1082.6,265.1 1089.5,254.1 1090.8,252.7 1092.1,250.3 1093.5,248.8 1094.8,247.0 1096.2,244.6 1097.5,243.3 1098.9,240.7 1100.2,239.4 1101.3,255.4 1103.2,286.8 1104.3,319.0 1105.1,368.0 1105.7,416.0 1375.4,416.0 1376.4,415.0 1378.2,317.1 1379.9,281.2 1382.8,245.2 1385.6,220.1 1386.1,219.0 1386.6,218.0 1387.1,216.8 1387.6,215.8 1388.1,214.6 1388.6,213.7 1389.1,212.9 1389.6,211.7 1390.1,210.7 1390.6,209.9 1391.1,208.7 1391.6,208.6 1392.1,207.6 1392.6,206.3 1393.1,206.3 1393.6,205.1 1394.1,204.1 1394.6,204.2 1395.1,203.0 1395.6,202.5 1396.1,201.0 1396.6,201.1 1397.1,199.3 1397.6,198.8 1398.1,198.2 1398.6,196.9 1399.1,197.1 1399.6,195.7 1400.1,195.1 1400.6,195.1 1401.1,194.1 1401.6,194.4 1402.1,193.4 1402.6,193.3 1403.1,192.2 1403.6,192.3 1404.1,191.6 1404.6,189.8 1405.1,190.3 1405.6,189.1 1406.1,189.3 1406.6,188.6 1407.1,188.3 1407.6,186.5 1408.1,186.4 1408.6,186.6 1409.1,186.4 1409.6,185.5 1410.1,184.0 1410.6,184.7 1411.1,183.5 1411.6,184.0 1412.1,184.2 1412.6,182.7 1413.1,183.9 1413.6,183.1 1414.1,182.1 1414.6,181.7 1415.1,182.0 1415.6,182.6 1416.1,181.9 1416.6,180.9 1417.1,180.6 1418.2,180.9 1419.0,182.3 1419.9,181.8 1420.8,183.1 1421.7,183.6 1422.5,185.4 1423.4,186.2 1424.4,211.4 1425.2,226.7 1426.6,270.0 1428.1,302.7 1429.5,336.0 1431.0,347.8 1432.5,349.8 1432.5,349.4 1433.4,350.3 1434.3,349.8 1435.2,350.0 1436.1,350.2 1437.0,350.3 1437.9,349.2 1438.8,349.6 1439.7,349.4 1440.1,349.8 1440.9,360.5 1441.6,330.0 1443.9,306.0 1444.1,309.0 1444.5,321.6 1444.9,310.6 1445.4,319.1 1445.8,310.0 1446.2,320.1 1446.6,309.0 1447.0,317.6 1447.5,311.8 1447.9,322.4 1448.3,312.4 1448.7,319.9 1449.1,312.1 1449.6,318.6 1450.0,310.2 1450.4,320.6 1450.8,314.1 1451.2,321.3 1451.7,313.0 1452.1,319.6 1452.5,311.8 1452.9,324.4 1453.3,311.4 1453.8,321.1 1454.2,310.9 1454.6,319.0 1455.0,310.1 1455.4,320.7 1455.9,311.6 1456.3,319.7 1456.7,310.1 1457.1,318.7 1457.5,311.9 1458.0,317.6 1458.4,310.1 1458.8,317.1 1459.2,310.3 1459.6,316.0 1460.1,309.7 1460.5,317.6 1460.9,310.4 1461.3,316.4 1461.7,308.1 1462.2,317.6 1462.6,306.3 1463.0,313.6 1463.4,306.4 1463.8,313.4 1464.3,305.8 1464.7,311.2 1465.1,303.1 1465.5,313.2 1465.9,304.2 1466.4,310.7 1466.8,302.1 1467.2,309.0 1467.6,299.9 1468.0,308.0 1468.5,298.7 1468.9,306.8 1469.3,298.2 1469.7,303.5 1470.5,282.6 1472.7,274.6 1476.2,265.7 1483.3,254.2 1484.5,252.7 1485.8,251.8 1487.0,250.1 1488.2,248.1 1489.5,247.0 1490.7,244.9 1491.9,242.9 1493.2,241.9 1494.4,240.5 1495.5,256.5 1497.4,286.8 1498.5,319.0 1499.3,368.0 1499.9,416.0 1888.0,416.0" stroke="#ff00ff" stroke-width="1.45"/>
<polyline points="91.0,416.0 123.6,416.0 124.6,416.0 125.3,411.8 126.0,407.5 126.7,403.3 127.4,399.1 128.1,394.8 128.8,390.6 129.5,386.4 130.2,382.2 130.9,377.9 131.6,373.7 132.3,369.5 133.0,365.2 133.7,361.0 134.4,356.8 135.1,352.5 135.8,348.3 136.5,344.1 137.2,339.8 137.9,335.6 138.6,331.4 139.3,327.2 140.0,322.9 140.7,318.7 141.4,314.5 142.1,310.2 142.8,306.0 143.5,301.8 144.2,297.5 144.9,293.3 145.6,289.1 146.3,284.8 147.0,280.6 147.8,276.4 148.5,272.2 149.2,267.9 149.9,263.7 150.6,259.5 151.3,255.2 152.0,251.0 152.7,246.8 153.4,242.5 154.1,238.3 154.8,234.1 155.5,229.8 156.2,225.6 156.9,221.4 157.6,217.2 158.3,212.9 159.0,208.7 159.7,204.5 160.4,200.2 161.1,196.0 161.8,191.8 162.5,187.5 163.2,183.3 163.9,179.1 164.6,174.8 165.3,170.6 166.0,166.4 166.7,162.2 167.4,157.9 168.1,153.7 168.8,149.5 169.5,145.2 170.2,141.0 170.8,137.3 171.4,134.0 172.0,131.1 172.5,128.6 173.0,126.4 173.4,124.7 173.8,123.3 174.2,122.4 174.5,121.8 174.8,121.6 183.2,121.6 183.9,122.9 184.6,124.1 185.3,125.4 186.0,126.7 186.7,128.8 187.4,131.4 188.1,133.9 188.8,136.4 189.5,138.9 190.2,141.4 190.9,143.9 191.6,146.3 192.3,148.7 193.0,151.1 193.7,153.5 194.4,156.0 195.1,158.4 195.8,160.8 196.5,164.0 197.2,167.2 197.9,170.5 198.6,173.7 199.3,177.0 200.0,180.2 200.7,183.5 201.4,186.7 202.1,190.0 202.8,193.2 203.5,196.5 204.2,200.2 204.9,204.2 205.6,208.2 206.3,212.3 207.0,216.3 207.7,220.4 208.4,224.4 209.1,228.4 209.8,232.5 210.5,236.5 211.2,240.6 212.0,245.1 212.7,249.6 213.4,254.0 214.1,258.5 214.8,263.0 215.5,267.4 216.2,271.9 216.9,276.4 217.6,280.8 218.3,285.3 219.0,289.8 219.7,294.2 220.4,298.7 221.1,303.1 221.8,307.6 222.5,312.1 223.2,316.5 223.9,320.8 224.6,325.1 225.3,329.5 226.0,333.8 226.7,338.1 227.4,342.5 228.1,346.8 228.8,351.1 229.5,355.4 230.2,359.8 230.9,364.1 231.6,368.4 232.3,372.7 233.0,377.1 233.7,381.4 234.4,385.7 235.1,390.0 235.8,394.4 236.5,398.7 237.2,403.0 237.9,407.3 238.6,411.7 239.3,416.0 240.3,416.0 350.7,416.0 351.7,416.0 352.4,411.6 353.1,407.3 353.8,402.9 354.5,398.5 355.2,394.2 355.9,389.8 356.6,385.4 357.3,381.1 358.0,376.7 358.7,372.3 359.4,368.0 360.1,363.6 360.8,359.3 361.5,354.9 362.2,350.5 363.0,346.2 363.7,341.8 364.4,337.4 365.1,333.1 365.8,328.7 366.5,324.3 367.2,320.0 367.9,315.6 368.6,311.2 369.3,306.9 370.0,302.5 370.7,298.1 371.4,293.8 372.1,289.4 372.8,285.0 373.5,280.7 374.2,276.3 374.9,272.0 375.6,267.6 376.3,263.2 377.0,258.9 377.7,254.5 378.4,250.1 379.1,245.8 379.8,241.4 380.5,237.0 381.2,232.7 381.9,228.3 382.6,223.9 383.3,219.6 384.0,215.2 384.7,210.8 385.5,206.5 386.2,202.1 386.9,197.7 387.6,193.4 388.3,189.0 389.0,184.7 389.7,180.3 390.4,175.9 391.1,171.6 391.8,167.2 392.5,162.8 393.2,158.5 393.9,154.1 394.6,149.7 395.3,145.4 396.0,141.0 396.6,137.3 397.2,134.0 397.7,131.1 398.2,128.6 398.7,126.4 399.2,124.7 399.6,123.3 399.9,122.4 400.3,121.8 400.6,121.6 413.3,121.6 414.0,122.9 414.7,124.1 415.4,125.4 416.1,126.7 416.8,128.8 417.5,131.4 418.2,133.9 418.9,136.4 419.6,138.9 420.3,141.4 421.0,143.9 421.7,146.3 422.4,148.7 423.1,151.1 423.8,153.5 424.5,156.0 425.2,158.4 425.9,160.8 426.6,164.0 427.3,167.2 428.0,170.5 428.7,173.7 429.4,177.0 430.1,180.2 430.8,183.5 431.5,186.7 432.2,190.0 432.9,193.2 433.6,196.5 434.3,200.2 435.0,204.2 435.7,208.2 436.4,212.3 437.1,216.3 437.8,220.4 438.5,224.4 439.2,228.4 439.9,232.5 440.6,236.5 441.4,240.6 442.1,245.1 442.8,249.6 443.5,254.0 444.2,258.5 444.9,263.0 445.6,267.4 446.3,271.9 447.0,276.4 447.7,280.8 448.4,285.3 449.1,289.8 449.8,294.2 450.5,298.7 451.2,303.1 451.9,307.6 452.6,312.1 453.3,316.5 454.0,320.8 454.7,325.1 455.4,329.5 456.1,333.8 456.8,338.1 457.5,342.5 458.2,346.8 458.9,351.1 459.6,355.4 460.3,359.8 461.0,364.1 461.7,368.4 462.4,372.7 463.1,377.1 463.8,381.4 464.5,385.7 465.2,390.0 465.9,394.4 466.6,398.7 467.3,403.0 468.0,407.3 468.7,411.7 469.4,416.0 470.4,416.0 615.3,416.0 616.3,416.0 617.0,411.6 617.7,407.3 618.4,402.9 619.1,398.5 619.8,394.2 620.5,389.8 621.2,385.4 621.9,381.1 622.6,376.7 623.3,372.3 624.0,368.0 624.7,363.6 625.4,359.3 626.1,354.9 626.8,350.5 627.6,346.2 628.3,341.8 629.0,337.4 629.7,333.1 630.4,328.7 631.1,324.3 631.8,320.0 632.5,315.6 633.2,311.2 633.9,306.9 634.6,302.5 635.3,298.1 636.0,293.8 636.7,289.4 637.4,285.0 638.1,280.7 638.8,276.3 639.5,272.0 640.2,267.6 640.9,263.2 641.6,258.9 642.3,254.5 643.0,250.1 643.7,245.8 644.4,241.4 645.1,237.0 645.8,232.7 646.5,228.3 647.2,223.9 647.9,219.6 648.6,215.2 649.3,210.8 650.1,206.5 650.8,202.1 651.5,197.7 652.2,193.4 652.9,189.0 653.6,184.7 654.3,180.3 655.0,175.9 655.7,171.6 656.4,167.2 657.1,162.8 657.8,158.5 658.5,154.1 659.2,149.7 659.9,145.4 660.6,141.0 661.2,137.3 661.8,134.0 662.3,131.1 662.8,128.6 663.3,126.4 663.8,124.7 664.2,123.3 664.5,122.4 664.9,121.8 665.2,121.6 683.3,121.6 684.0,122.8 684.7,124.0 685.4,125.2 686.1,126.4 686.8,128.1 687.5,130.5 688.2,132.8 688.9,135.2 689.6,137.6 690.3,140.0 691.0,142.3 691.7,144.6 692.4,146.8 693.1,149.1 693.8,151.4 694.5,153.7 695.2,156.0 695.9,158.2 696.6,160.5 697.3,163.4 698.0,166.5 698.8,169.5 699.5,172.6 700.2,175.7 700.9,178.7 701.6,181.8 702.3,184.8 703.0,187.9 703.7,190.9 704.4,194.0 705.1,197.1 705.8,200.6 706.5,204.4 707.2,208.2 707.9,212.0 708.6,215.8 709.3,219.7 710.0,223.5 710.7,227.3 711.4,231.1 712.1,234.9 712.8,238.7 713.5,242.7 714.2,246.9 714.9,251.1 715.6,255.3 716.3,259.5 717.0,263.7 717.7,268.0 718.4,272.2 719.1,276.4 719.8,280.6 720.5,284.8 721.2,289.0 721.9,293.2 722.6,297.4 723.3,301.6 724.0,305.8 724.7,310.0 725.4,314.2 726.1,318.3 726.8,322.3 727.5,326.4 728.3,330.5 729.0,334.6 729.7,338.6 730.4,342.7 731.1,346.8 731.8,350.8 732.5,354.9 733.2,359.0 733.9,363.1 734.6,367.1 735.3,371.2 736.0,375.3 736.7,379.4 737.4,383.4 738.1,387.5 738.8,391.6 739.5,395.6 740.2,399.7 740.9,403.8 741.6,407.9 742.3,411.9 743.0,416.0 744.0,416.0 985.2,416.0 986.2,416.0 986.9,411.6 987.6,407.1 988.3,402.7 989.0,398.3 989.7,393.8 990.4,389.4 991.2,385.0 991.9,380.5 992.6,376.1 993.3,371.6 994.0,367.2 994.7,362.8 995.4,358.3 996.1,353.9 996.8,349.5 997.5,345.0 998.2,340.6 998.9,336.2 999.7,331.7 1000.4,327.3 1001.1,322.9 1001.8,318.4 1002.5,314.0 1003.2,309.5 1003.9,305.1 1004.6,300.7 1005.3,296.2 1006.0,291.8 1006.7,287.4 1007.4,282.9 1008.2,278.5 1008.9,274.1 1009.6,269.6 1010.3,265.2 1011.0,260.8 1011.7,256.3 1012.4,251.9 1013.1,247.5 1013.8,243.0 1014.5,238.6 1015.2,234.1 1015.9,229.7 1016.6,225.3 1017.4,220.8 1018.1,216.4 1018.8,212.0 1019.5,207.5 1020.2,203.1 1020.9,198.7 1021.6,194.2 1022.3,189.8 1023.0,185.4 1023.7,180.9 1024.4,176.5 1025.1,172.0 1025.9,167.6 1026.6,163.2 1027.3,158.7 1028.0,154.3 1028.7,149.9 1029.4,145.4 1030.1,141.0 1030.7,137.3 1031.3,134.0 1031.8,131.1 1032.3,128.6 1032.8,126.4 1033.2,124.7 1033.7,123.3 1034.0,122.4 1034.4,121.8 1034.7,121.6 1049.1,121.6 1049.8,122.8 1050.5,124.1 1051.2,125.3 1051.9,126.6 1052.6,128.7 1053.3,131.2 1054.0,133.7 1054.7,136.2 1055.4,138.6 1056.1,141.1 1056.8,143.5 1057.5,145.9 1058.2,148.3 1058.9,150.7 1059.6,153.1 1060.3,155.5 1061.0,157.9 1061.7,160.3 1062.4,163.2 1063.1,166.4 1063.9,169.7 1064.6,172.9 1065.3,176.1 1066.0,179.3 1066.7,182.5 1067.4,185.7 1068.1,188.9 1068.8,192.1 1069.5,195.3 1070.2,198.7 1070.9,202.7 1071.6,206.6 1072.3,210.6 1073.0,214.6 1073.7,218.6 1074.4,222.6 1075.1,226.6 1075.8,230.6 1076.5,234.6 1077.2,238.6 1077.9,242.8 1078.6,247.3 1079.3,251.7 1080.0,256.1 1080.7,260.5 1081.4,264.9 1082.1,269.3 1082.8,273.7 1083.5,278.1 1084.2,282.5 1084.9,286.9 1085.6,291.3 1086.3,295.8 1087.0,300.2 1087.7,304.6 1088.4,309.0 1089.1,313.4 1089.8,317.7 1090.5,322.0 1091.2,326.3 1092.0,330.5 1092.7,334.8 1093.4,339.1 1094.1,343.4 1094.8,347.6 1095.5,351.9 1096.2,356.2 1096.9,360.5 1097.6,364.7 1098.3,369.0 1099.0,373.3 1099.7,377.5 1100.4,381.8 1101.1,386.1 1101.8,390.4 1102.5,394.6 1103.2,398.9 1103.9,403.2 1104.6,407.5 1105.3,411.7 1106.0,416.0 1107.0,416.0 1377.6,416.0 1378.6,416.0 1379.3,411.7 1380.0,407.4 1380.7,403.1 1381.4,398.8 1382.1,394.5 1382.8,390.2 1383.5,385.9 1384.2,381.6 1384.9,377.3 1385.6,373.0 1386.3,368.7 1387.0,364.4 1387.7,360.1 1388.4,355.8 1389.1,351.5 1389.8,347.2 1390.5,343.0 1391.2,338.7 1391.9,334.4 1392.6,330.1 1393.3,325.8 1394.0,321.5 1394.7,317.2 1395.4,312.9 1396.1,308.6 1396.8,304.3 1397.5,300.0 1398.2,295.7 1398.9,291.4 1399.6,287.1 1400.3,282.8 1401.0,278.5 1401.8,274.2 1402.5,269.9 1403.2,265.6 1403.9,261.3 1404.6,257.0 1405.3,252.7 1406.0,248.4 1406.7,244.1 1407.4,239.8 1408.1,235.5 1408.8,231.2 1409.5,226.9 1410.2,222.6 1410.9,218.3 1411.6,214.0 1412.3,209.8 1413.0,205.5 1413.7,201.2 1414.4,196.9 1415.1,192.6 1415.8,188.3 1416.5,184.0 1417.2,179.7 1417.9,175.4 1418.6,171.1 1419.3,166.8 1420.0,162.5 1420.7,158.2 1421.4,153.9 1422.1,149.6 1422.8,145.3 1423.5,141.0 1424.1,137.3 1424.7,134.0 1425.2,131.1 1425.8,128.6 1426.2,126.4 1426.7,124.7 1427.1,123.3 1427.5,122.4 1427.8,121.8 1428.1,121.6 1441.5,121.6 1442.2,122.8 1442.9,124.0 1443.6,125.2 1444.3,126.4 1445.0,128.2 1445.7,130.6 1446.4,133.0 1447.1,135.4 1447.8,137.8 1448.5,140.2 1449.2,142.6 1449.9,144.9 1450.6,147.2 1451.3,149.5 1452.1,151.8 1452.8,154.1 1453.5,156.4 1454.2,158.7 1454.9,161.1 1455.6,164.1 1456.3,167.2 1457.0,170.3 1457.7,173.4 1458.4,176.5 1459.1,179.6 1459.8,182.7 1460.5,185.8 1461.2,188.9 1461.9,192.0 1462.6,195.1 1463.3,198.2 1464.0,202.1 1464.7,205.9 1465.4,209.8 1466.1,213.6 1466.8,217.5 1467.5,221.3 1468.2,225.2 1468.9,229.0 1469.6,232.9 1470.3,236.7 1471.0,240.6 1471.8,244.9 1472.5,249.1 1473.2,253.4 1473.9,257.6 1474.6,261.9 1475.3,266.2 1476.0,270.4 1476.7,274.7 1477.4,278.9 1478.1,283.2 1478.8,287.4 1479.5,291.7 1480.2,295.9 1480.9,300.2 1481.6,304.4 1482.3,308.7 1483.0,312.9 1483.7,317.1 1484.4,321.2 1485.1,325.4 1485.8,329.5 1486.5,333.6 1487.2,337.7 1487.9,341.8 1488.6,346.0 1489.3,350.1 1490.0,354.2 1490.8,358.3 1491.5,362.4 1492.2,366.6 1492.9,370.7 1493.6,374.8 1494.3,378.9 1495.0,383.0 1495.7,387.2 1496.4,391.3 1497.1,395.4 1497.8,399.5 1498.5,403.6 1499.2,407.8 1499.9,411.9 1500.6,416.0 1501.6,416.0 1888.0,416.0" stroke="#ff0000" stroke-width="1.45"/>
</g><g clip-path="url(#pc)" fill="none">
<path d="M91 416H1888" stroke="#ababab" stroke-width="2.1"/>
<path d="M497.3 61V422.8M497.3 428.7V570" stroke="#f4f4f4" stroke-width="2"/>
</g>
</svg>
<div class="b" style="left:90.00px;top:60.00px;width:1798.00px;height:1.00px;background:#8a8a8a"></div>
<div class="b" style="left:90.00px;top:60.00px;width:1.00px;height:512.00px;background:#8a8a8a"></div>
<div class="b" style="left:91.00px;top:570.00px;width:1798.00px;height:1.00px;background:#707070"></div>
<div class="b" style="left:91.00px;top:571.00px;width:1798.00px;height:2.00px;background:#d8d8d8"></div>
<div class="b" style="left:1888.00px;top:61.00px;width:1.00px;height:512.00px;background:#dadada"></div>
<span class="t" style="left:29.96px;top:55.17px;font:normal 14.40px/14.40px 'Liberation Sans',sans-serif;color:#000;transform:scaleX(0.9500);">9582,31</span>
<div class="b" style="left:83.00px;top:61.00px;width:6.00px;height:1.00px;background:#000"></div>
<span class="t" style="left:50.34px;top:76.87px;font:normal 14.40px/14.40px 'Liberation Sans',sans-serif;color:#000;transform:scaleX(0.9500);">9000</span>
<div class="b" style="left:83.00px;top:83.00px;width:6.00px;height:1.00px;background:#000"></div>
<span class="t" style="left:50.34px;top:113.97px;font:normal 14.40px/14.40px 'Liberation Sans',sans-serif;color:#000;transform:scaleX(0.9500);">8000</span>
<div class="b" style="left:83.00px;top:120.00px;width:6.00px;height:1.00px;background:#000"></div>
<span class="t" style="left:50.34px;top:150.97px;font:normal 14.40px/14.40px 'Liberation Sans',sans-serif;color:#000;transform:scaleX(0.9500);">7000</span>
<div class="b" style="left:83.00px;top:157.00px;width:6.00px;height:1.00px;background:#000"></div>
<span class="t" style="left:50.34px;top:187.97px;font:normal 14.40px/14.40px 'Liberation Sans',sans-serif;color:#000;transform:scaleX(0.9500);">6000</span>
<div class="b" style="left:83.00px;top:194.00px;width:6.00px;height:1.00px;background:#000"></div>
<span class="t" style="left:50.34px;top:225.17px;font:normal 14.40px/14.40px 'Liberation Sans',sans-serif;color:#000;transform:scaleX(0.9500);">5000</span>
<div class="b" style="left:83.00px;top:231.00px;width:6.00px;height:1.00px;background:#000"></div>
<span class="t" style="left:50.34px;top:261.97px;font:normal 14.40px/14.40px 'Liberation Sans',sans-serif;color:#000;transform:scaleX(0.9500);">4000</span>
<div class="b" style="left:83.00px;top:268.00px;width:6.00px;height:1.00px;background:#000"></div>
<span class="t" style="left:50.34px;top:298.97px;font:normal 14.40px/14.40px 'Liberation Sans',sans-serif;color:#000;transform:scaleX(0.9500);">3000</span>
<div class="b" style="left:83.00px;top:305.00px;width:6.00px;height:1.00px;background:#000"></div>
<span class="t" style="left:50.34px;top:335.77px;font:normal 14.40px/14.40px 'Liberation Sans',sans-serif;color:#000;transform:scaleX(0.9500);">2000</span>
<div class="b" style="left:83.00px;top:342.00px;width:6.00px;height:1.00px;background:#000"></div>
<span class="t" style="left:50.34px;top:372.87px;font:normal 14.40px/14.40px 'Liberation Sans',sans-serif;color:#000;transform:scaleX(0.9500);">1000</span>
<div class="b" style="left:83.00px;top:379.00px;width:6.00px;height:1.00px;background:#000"></div>
<span class="t" style="left:73.19px;top:409.17px;font:normal 14.40px/14.40px 'Liberation Sans',sans-serif;color:#000;transform:scaleX(0.9500);">0</span>
<div class="b" style="left:83.00px;top:415.00px;width:6.00px;height:1.00px;background:#000"></div>
<span class="t" style="left:45.83px;top:446.67px;font:normal 14.40px/14.40px 'Liberation Sans',sans-serif;color:#000;transform:scaleX(0.9500);">-1000</span>
<div class="b" style="left:83.00px;top:453.00px;width:6.00px;height:1.00px;background:#000"></div>
<span class="t" style="left:45.83px;top:483.87px;font:normal 14.40px/14.40px 'Liberation Sans',sans-serif;color:#000;transform:scaleX(0.9500);">-2000</span>
<div class="b" style="left:83.00px;top:490.00px;width:6.00px;height:1.00px;background:#000"></div>
<span class="t" style="left:45.83px;top:520.57px;font:normal 14.40px/14.40px 'Liberation Sans',sans-serif;color:#000;transform:scaleX(0.9500);">-3000</span>
<div class="b" style="left:83.00px;top:527.00px;width:6.00px;height:1.00px;background:#000"></div>
<span class="t" style="left:34.24px;top:564.17px;font:normal 14.40px/14.40px 'Liberation Sans',sans-serif;color:#000;transform:scaleX(0.9500);">-4176,9</span>
<div class="b" style="left:83.00px;top:570.00px;width:6.00px;height:1.00px;background:#000"></div>
<div class="b" style="left:83.00px;top:564.00px;width:6.00px;height:1.00px;background:#000"></div>
<span class="t" style="left:70.18px;top:583.17px;font:normal 14.40px/14.40px 'Liberation Sans',sans-serif;color:#000;transform:scaleX(0.9450);">0,0000</span>
<div class="b" style="left:91.00px;top:574.00px;width:1.00px;height:6.00px;background:#000"></div>
<span class="t" style="left:182.40px;top:583.17px;font:normal 14.40px/14.40px 'Liberation Sans',sans-serif;color:#000;transform:scaleX(0.9450);">5,0000</span>
<div class="b" style="left:203.00px;top:574.00px;width:1.00px;height:6.00px;background:#000"></div>
<span class="t" style="left:290.63px;top:583.17px;font:normal 14.40px/14.40px 'Liberation Sans',sans-serif;color:#000;transform:scaleX(0.9450);">10,0000</span>
<div class="b" style="left:316.00px;top:574.00px;width:1.00px;height:6.00px;background:#000"></div>
<span class="t" style="left:402.88px;top:583.17px;font:normal 14.40px/14.40px 'Liberation Sans',sans-serif;color:#000;transform:scaleX(0.9450);">15,0000</span>
<div class="b" style="left:428.00px;top:574.00px;width:1.00px;height:6.00px;background:#000"></div>
<span class="t" style="left:515.30px;top:583.17px;font:normal 14.40px/14.40px 'Liberation Sans',sans-serif;color:#000;transform:scaleX(0.9450);">20,0000</span>
<div class="b" style="left:540.00px;top:574.00px;width:1.00px;height:6.00px;background:#000"></div>
<span class="t" style="left:627.55px;top:583.17px;font:normal 14.40px/14.40px 'Liberation Sans',sans-serif;color:#000;transform:scaleX(0.9450);">25,0000</span>
<div class="b" style="left:652.00px;top:574.00px;width:1.00px;height:6.00px;background:#000"></div>
<span class="t" style="left:739.90px;top:583.17px;font:normal 14.40px/14.40px 'Liberation Sans',sans-serif;color:#000;transform:scaleX(0.9450);">30,0000</span>
<div class="b" style="left:765.00px;top:574.00px;width:1.00px;height:6.00px;background:#000"></div>
<span class="t" style="left:852.15px;top:583.17px;font:normal 14.40px/14.40px 'Liberation Sans',sans-serif;color:#000;transform:scaleX(0.9450);">35,0000</span>
<div class="b" style="left:877.00px;top:574.00px;width:1.00px;height:6.00px;background:#000"></div>
<span class="t" style="left:964.51px;top:583.17px;font:normal 14.40px/14.40px 'Liberation Sans',sans-serif;color:#000;transform:scaleX(0.9450);">40,0000</span>
<div class="b" style="left:989.00px;top:574.00px;width:1.00px;height:6.00px;background:#000"></div>
<span class="t" style="left:1076.76px;top:583.17px;font:normal 14.40px/14.40px 'Liberation Sans',sans-serif;color:#000;transform:scaleX(0.9450);">45,0000</span>
<div class="b" style="left:1101.00px;top:574.00px;width:1.00px;height:6.00px;background:#000"></div>
<span class="t" style="left:1188.87px;top:583.17px;font:normal 14.40px/14.40px 'Liberation Sans',sans-serif;color:#000;transform:scaleX(0.9450);">50,0000</span>
<div class="b" style="left:1214.00px;top:574.00px;width:1.00px;height:6.00px;background:#000"></div>
<span class="t" style="left:1301.12px;top:583.17px;font:normal 14.40px/14.40px 'Liberation Sans',sans-serif;color:#000;transform:scaleX(0.9450);">55,0000</span>
<div class="b" style="left:1326.00px;top:574.00px;width:1.00px;height:6.00px;background:#000"></div>
<span class="t" style="left:1413.30px;top:583.17px;font:normal 14.40px/14.40px 'Liberation Sans',sans-serif;color:#000;transform:scaleX(0.9450);">60,0000</span>
<div class="b" style="left:1438.00px;top:574.00px;width:1.00px;height:6.00px;background:#000"></div>
<span class="t" style="left:1525.55px;top:583.17px;font:normal 14.40px/14.40px 'Liberation Sans',sans-serif;color:#000;transform:scaleX(0.9450);">65,0000</span>
<div class="b" style="left:1550.00px;top:574.00px;width:1.00px;height:6.00px;background:#000"></div>
<span class="t" style="left:1637.80px;top:583.17px;font:normal 14.40px/14.40px 'Liberation Sans',sans-serif;color:#000;transform:scaleX(0.9450);">70,0000</span>
<div class="b" style="left:1663.00px;top:574.00px;width:1.00px;height:6.00px;background:#000"></div>
<span class="t" style="left:1750.05px;top:583.17px;font:normal 14.40px/14.40px 'Liberation Sans',sans-serif;color:#000;transform:scaleX(0.9450);">75,0000</span>
<div class="b" style="left:1775.00px;top:574.00px;width:1.00px;height:6.00px;background:#000"></div>
<span class="t" style="left:1862.37px;top:583.17px;font:normal 14.40px/14.40px 'Liberation Sans',sans-serif;color:#000;transform:scaleX(0.9450);">80,0000</span>
<div class="b" style="left:1887.00px;top:574.00px;width:1.00px;height:6.00px;background:#000"></div>
<div class="b" style="left:0.00px;top:609.00px;width:1914.00px;height:23.00px;background:#f0f0f0"></div>
<div class="b" style="left:0.00px;top:609.70px;width:1623.00px;height:1.70px;background:#fbfbfb"></div>
<div class="b" style="left:0.00px;top:632.00px;width:1914.00px;height:7.00px;background:#bfbfbf"></div>
<svg class="b" style="left:7px;top:615px" width="12" height="12" viewBox="0 0 12 12"><path d="M9.4 1.6L3.2 6L9.4 10.4" fill="none" stroke="#4a4a4a" stroke-width="2.3"/></svg>
<svg class="b" style="left:1607px;top:615px" width="12" height="12" viewBox="0 0 12 12"><path d="M2.6 1.6L8.8 6L2.6 10.4" fill="none" stroke="#4a4a4a" stroke-width="2.3"/></svg>
<div class="b" style="left:0.00px;top:639.00px;width:1914.00px;height:273.00px;background:#f0f0f0"></div>
<span class="t" style="left:154.00px;top:649.06px;font:normal 14.20px/14.20px 'Liberation Sans',sans-serif;color:#000;transform:scaleX(0.9880);">Address</span>
<span class="t" style="left:288.36px;top:649.06px;font:normal 14.20px/14.20px 'Liberation Sans',sans-serif;color:#000;transform:scaleX(1.0072);">DataType</span>
<span class="t" style="left:372.71px;top:649.06px;font:normal 14.20px/14.20px 'Liberation Sans',sans-serif;color:#000;transform:scaleX(0.9244);">Scale</span>
<span class="t" style="left:425.32px;top:649.06px;font:normal 14.20px/14.20px 'Liberation Sans',sans-serif;color:#000;transform:scaleX(1.0563);">Offset</span>
<span class="t" style="left:495.27px;top:649.06px;font:normal 14.20px/14.20px 'Liberation Sans',sans-serif;color:#000;transform:scaleX(1.0211);">Gain</span>
<span class="t" style="left:594.50px;top:649.06px;font:normal 14.20px/14.20px 'Liberation Sans',sans-serif;color:#000;transform:scaleX(1.0246);">Value</span>
<div class="b" style="left:547.00px;top:669.50px;width:30.00px;height:119.00px;background:#b4b4b4"></div>
<span class="t" style="left:19.55px;top:675.78px;font:normal 15.60px/15.60px 'Liberation Sans',sans-serif;color:#000;transform:scaleX(0.8105);">1</span>
<div class="b" style="left:39.40px;top:676.40px;width:16.40px;height:16.40px;background:#fff;border:1.4px solid #3c3c3c"><svg class="b" style="left:0;top:0" width="14" height="14" viewBox="0 0 14 14"><path d="M1.6 7.2L5.2 10.8L12.2 3.4" fill="none" stroke="#333" stroke-width="1.6"/></svg></div>
<div class="b" style="left:67.50px;top:669.70px;width:29.50px;height:29.00px;background:#a6a6a6;border:1px solid #777;border-right:2px solid #5c5c5c;border-bottom:2px solid #5c5c5c;border-top-color:#d0d0d0;border-left-color:#b4b4b4"></div>
<div class="b" style="left:70.00px;top:672.70px;width:23.40px;height:22.60px;background:#ff0000"></div>
<div class="b" style="left:99.40px;top:672.30px;width:193.60px;height:23.80px;background:#fff;border:1px solid #b0b0b0;box-shadow:0 0 0 1px #e4e4e4"></div>
<div class="b dd" style="left:272.00px;top:674.10px;width:19.60px;height:19.80px;"><svg class="b" style="left:-1px;top:-1px" width="19" height="19"><path d="M5.3 9.3L9.8 13.8L14.3 9.3" fill="none" stroke="#444" stroke-width="1.2"/></svg></div>
<span class="t" style="left:105.06px;top:676.82px;font:normal 14.50px/14.50px 'Liberation Sans',sans-serif;color:#000;transform:scaleX(0.9789);">Motor speed (rpm)(I32)</span>
<div class="b" style="left:294.80px;top:672.30px;width:61.80px;height:23.80px;background:#fff;border:1px solid #b0b0b0;box-shadow:0 0 0 1px #e4e4e4"></div>
<div class="b dd" style="left:333.20px;top:674.10px;width:20.80px;height:19.80px;"><svg class="b" style="left:-1px;top:-1px" width="20" height="19"><path d="M5.9 9.3L10.4 13.8L14.9 9.3" fill="none" stroke="#444" stroke-width="1.2"/></svg></div>
<span class="t" style="left:298.87px;top:676.82px;font:normal 14.50px/14.50px 'Liberation Sans',sans-serif;color:#000;transform:scaleX(0.9418);">I32</span>
<div class="b" style="left:357.60px;top:672.30px;width:58.60px;height:22.60px;background:#fff;border:1px solid #b4b4b4;box-shadow:0 0 0 1px #e2e2e2"></div>
<span class="t" style="left:361.70px;top:676.92px;font:normal 14.50px/14.50px 'Liberation Sans',sans-serif;color:#000;transform:scaleX(0.8244);">1</span>
<div class="b" style="left:417.60px;top:672.30px;width:58.60px;height:22.60px;background:#fff;border:1px solid #b4b4b4;box-shadow:0 0 0 1px #e2e2e2"></div>
<span class="t" style="left:422.00px;top:676.92px;font:normal 14.50px/14.50px 'Liberation Sans',sans-serif;color:#000;transform:scaleX(0.9812);">0</span>
<div class="b" style="left:477.60px;top:672.30px;width:58.80px;height:22.60px;background:#fff;border:1px solid #b4b4b4;box-shadow:0 0 0 1px #e2e2e2"></div>
<span class="t" style="left:481.70px;top:676.92px;font:normal 14.50px/14.50px 'Liberation Sans',sans-serif;color:#000;transform:scaleX(0.8244);">1</span>
<div class="b" style="left:550.30px;top:672.10px;width:23.00px;height:22.60px;background:#fff"></div>
<span class="t" style="left:552.06px;top:674.51px;font:normal 14.30px/14.30px 'Liberation Sans',sans-serif;color:#000;transform:scaleX(1.0817);">0d</span>
<div class="b" style="left:582.00px;top:667.80px;width:150.00px;height:29.80px;background:#fff;border:1px solid #000;border-top-width:1.5px;border-left-width:1.5px"></div>
<span class="t" style="left:585.80px;top:672.41px;font:normal 14.30px/14.30px 'Liberation Sans',sans-serif;color:#000;">0</span>
<span class="t" style="left:18.43px;top:705.98px;font:normal 15.60px/15.60px 'Liberation Sans',sans-serif;color:#000;transform:scaleX(1.1148);">2</span>
<div class="b" style="left:40.40px;top:706.60px;width:16.40px;height:16.40px;background:#fff;border:1.4px solid #3c3c3c"><svg class="b" style="left:0;top:0" width="14" height="14" viewBox="0 0 14 14"><path d="M1.6 7.2L5.2 10.8L12.2 3.4" fill="none" stroke="#333" stroke-width="1.6"/></svg></div>
<div class="b" style="left:67.50px;top:699.80px;width:29.50px;height:29.00px;background:#a6a6a6;border:1px solid #777;border-right:2px solid #5c5c5c;border-bottom:2px solid #5c5c5c;border-top-color:#d0d0d0;border-left-color:#b4b4b4"></div>
<div class="b" style="left:70.00px;top:702.80px;width:23.40px;height:22.60px;background:#00ff00"></div>
<div class="b" style="left:99.40px;top:702.40px;width:193.60px;height:23.80px;background:#f4f4f4;border:1px solid #d0d0d0;box-shadow:0 0 0 1px #e4e4e4"></div>
<div class="b dd" style="left:272.00px;top:704.20px;width:19.60px;height:19.80px;background:#ececec;border-color:#d6d6d6"><svg class="b" style="left:-1px;top:-1px" width="19" height="19"><path d="M5.3 9.3L9.8 13.8L14.3 9.3" fill="none" stroke="#bdbdbd" stroke-width="1.2"/></svg></div>
<span class="t" style="left:105.04px;top:707.02px;font:normal 14.50px/14.50px 'Liberation Sans',sans-serif;color:#a0a0a0;transform:scaleX(1.0039);">No Selection</span>
<div class="b" style="left:294.80px;top:702.40px;width:61.80px;height:23.80px;background:#f4f4f4;border:1px solid #d0d0d0;box-shadow:0 0 0 1px #e4e4e4"></div>
<div class="b dd" style="left:333.20px;top:704.20px;width:20.80px;height:19.80px;background:#ececec;border-color:#d6d6d6"><svg class="b" style="left:-1px;top:-1px" width="20" height="19"><path d="M5.9 9.3L10.4 13.8L14.9 9.3" fill="none" stroke="#bdbdbd" stroke-width="1.2"/></svg></div>
<span class="t" style="left:299.08px;top:707.02px;font:normal 14.50px/14.50px 'Liberation Sans',sans-serif;color:#a0a0a0;transform:scaleX(0.9418);">U16</span>
<div class="b" style="left:357.60px;top:702.40px;width:58.60px;height:22.60px;background:#fff;border:1px solid #b4b4b4;box-shadow:0 0 0 1px #e2e2e2"></div>
<span class="t" style="left:361.70px;top:707.12px;font:normal 14.50px/14.50px 'Liberation Sans',sans-serif;color:#000;transform:scaleX(0.8244);">1</span>
<div class="b" style="left:417.60px;top:702.40px;width:58.60px;height:22.60px;background:#fff;border:1px solid #b4b4b4;box-shadow:0 0 0 1px #e2e2e2"></div>
<span class="t" style="left:422.00px;top:707.12px;font:normal 14.50px/14.50px 'Liberation Sans',sans-serif;color:#000;transform:scaleX(0.9812);">0</span>
<div class="b" style="left:477.60px;top:702.40px;width:58.80px;height:22.60px;background:#fff;border:1px solid #b4b4b4;box-shadow:0 0 0 1px #e2e2e2"></div>
<span class="t" style="left:481.70px;top:707.12px;font:normal 14.50px/14.50px 'Liberation Sans',sans-serif;color:#000;transform:scaleX(0.8244);">1</span>
<div class="b" style="left:550.30px;top:702.20px;width:23.00px;height:22.60px;background:#fff"></div>
<span class="t" style="left:552.06px;top:704.71px;font:normal 14.30px/14.30px 'Liberation Sans',sans-serif;color:#000;transform:scaleX(1.0817);">0d</span>
<div class="b" style="left:582.00px;top:699.60px;width:150.00px;height:29.00px;background:#fff;border:1px solid #000;border-top-width:1.5px;border-left-width:1.5px"></div>
<span class="t" style="left:585.80px;top:704.21px;font:normal 14.30px/14.30px 'Liberation Sans',sans-serif;color:#000;">0</span>
<span class="t" style="left:18.72px;top:736.18px;font:normal 15.60px/15.60px 'Liberation Sans',sans-serif;color:#000;transform:scaleX(1.0684);">3</span>
<div class="b" style="left:40.40px;top:736.80px;width:16.40px;height:16.40px;background:#fff;border:1.4px solid #3c3c3c"><svg class="b" style="left:0;top:0" width="14" height="14" viewBox="0 0 14 14"><path d="M1.6 7.2L5.2 10.8L12.2 3.4" fill="none" stroke="#333" stroke-width="1.6"/></svg></div>
<div class="b" style="left:67.50px;top:729.90px;width:29.50px;height:29.00px;background:#a6a6a6;border:1px solid #777;border-right:2px solid #5c5c5c;border-bottom:2px solid #5c5c5c;border-top-color:#d0d0d0;border-left-color:#b4b4b4"></div>
<div class="b" style="left:70.00px;top:732.90px;width:23.40px;height:22.60px;background:#0078d7"></div>
<div class="b" style="left:99.40px;top:732.50px;width:193.60px;height:23.80px;background:#fff;border:1px solid #b0b0b0;box-shadow:0 0 0 1px #e4e4e4"></div>
<div class="b dd" style="left:272.00px;top:734.30px;width:19.60px;height:19.80px;"><svg class="b" style="left:-1px;top:-1px" width="19" height="19"><path d="M5.3 9.3L9.8 13.8L14.3 9.3" fill="none" stroke="#444" stroke-width="1.2"/></svg></div>
<span class="t" style="left:105.04px;top:737.22px;font:normal 14.50px/14.50px 'Liberation Sans',sans-serif;color:#000;transform:scaleX(1.0039);">No Selection</span>
<div class="b" style="left:294.80px;top:732.50px;width:61.80px;height:23.80px;background:#fff;border:1px solid #b0b0b0;box-shadow:0 0 0 1px #e4e4e4"></div>
<div class="b dd" style="left:333.20px;top:734.30px;width:20.80px;height:19.80px;"><svg class="b" style="left:-1px;top:-1px" width="20" height="19"><path d="M5.9 9.3L10.4 13.8L14.9 9.3" fill="none" stroke="#444" stroke-width="1.2"/></svg></div>
<span class="t" style="left:299.08px;top:737.22px;font:normal 14.50px/14.50px 'Liberation Sans',sans-serif;color:#000;transform:scaleX(0.9418);">U16</span>
<div class="b" style="left:357.60px;top:732.50px;width:58.60px;height:22.60px;background:#fff;border:1px solid #b4b4b4;box-shadow:0 0 0 1px #e2e2e2"></div>
<span class="t" style="left:361.70px;top:737.32px;font:normal 14.50px/14.50px 'Liberation Sans',sans-serif;color:#000;transform:scaleX(0.8244);">1</span>
<div class="b" style="left:417.60px;top:732.50px;width:58.60px;height:22.60px;background:#fff;border:1px solid #b4b4b4;box-shadow:0 0 0 1px #e2e2e2"></div>
<span class="t" style="left:422.00px;top:737.32px;font:normal 14.50px/14.50px 'Liberation Sans',sans-serif;color:#000;transform:scaleX(0.9812);">0</span>
<div class="b" style="left:477.60px;top:732.50px;width:58.80px;height:22.60px;background:#fff;border:1px solid #b4b4b4;box-shadow:0 0 0 1px #e2e2e2"></div>
<span class="t" style="left:481.70px;top:737.32px;font:normal 14.50px/14.50px 'Liberation Sans',sans-serif;color:#000;transform:scaleX(0.8244);">1</span>
<div class="b" style="left:550.30px;top:732.30px;width:23.00px;height:22.60px;background:#fff"></div>
<span class="t" style="left:552.06px;top:734.91px;font:normal 14.30px/14.30px 'Liberation Sans',sans-serif;color:#000;transform:scaleX(1.0817);">0d</span>
<div class="b" style="left:582.00px;top:730.40px;width:150.00px;height:29.40px;background:#fff;border:1px solid #000;border-top-width:1.5px;border-left-width:1.5px"></div>
<span class="t" style="left:585.80px;top:735.01px;font:normal 14.30px/14.30px 'Liberation Sans',sans-serif;color:#000;">0</span>
<span class="t" style="left:18.99px;top:766.38px;font:normal 15.60px/15.60px 'Liberation Sans',sans-serif;color:#000;transform:scaleX(1.0055);">4</span>
<div class="b" style="left:40.40px;top:767.00px;width:16.40px;height:16.40px;background:#fff;border:1.4px solid #3c3c3c"><svg class="b" style="left:0;top:0" width="14" height="14" viewBox="0 0 14 14"><path d="M1.6 7.2L5.2 10.8L12.2 3.4" fill="none" stroke="#333" stroke-width="1.6"/></svg></div>
<div class="b" style="left:67.50px;top:760.00px;width:29.50px;height:29.00px;background:#a6a6a6;border:1px solid #777;border-right:2px solid #5c5c5c;border-bottom:2px solid #5c5c5c;border-top-color:#d0d0d0;border-left-color:#b4b4b4"></div>
<div class="b" style="left:70.00px;top:763.00px;width:23.40px;height:22.60px;background:#ffff00"></div>
<div class="b" style="left:99.40px;top:762.60px;width:193.60px;height:23.80px;background:#fff;border:1px solid #b0b0b0;box-shadow:0 0 0 1px #e4e4e4"></div>
<div class="b dd" style="left:272.00px;top:764.40px;width:19.60px;height:19.80px;"><svg class="b" style="left:-1px;top:-1px" width="19" height="19"><path d="M5.3 9.3L9.8 13.8L14.3 9.3" fill="none" stroke="#444" stroke-width="1.2"/></svg></div>
<span class="t" style="left:105.13px;top:767.42px;font:normal 14.50px/14.50px 'Liberation Sans',sans-serif;color:#000;transform:scaleX(0.9267);">DC_bus (Vdc)</span>
<div class="b" style="left:294.80px;top:762.60px;width:61.80px;height:23.80px;background:#fff;border:1px solid #b0b0b0;box-shadow:0 0 0 1px #e4e4e4"></div>
<div class="b dd" style="left:333.20px;top:764.40px;width:20.80px;height:19.80px;"><svg class="b" style="left:-1px;top:-1px" width="20" height="19"><path d="M5.9 9.3L10.4 13.8L14.9 9.3" fill="none" stroke="#444" stroke-width="1.2"/></svg></div>
<span class="t" style="left:299.08px;top:767.42px;font:normal 14.50px/14.50px 'Liberation Sans',sans-serif;color:#000;transform:scaleX(0.9418);">U16</span>
<div class="b" style="left:357.60px;top:762.60px;width:58.60px;height:22.60px;background:#fff;border:1px solid #b4b4b4;box-shadow:0 0 0 1px #e2e2e2"></div>
<span class="t" style="left:361.70px;top:767.52px;font:normal 14.50px/14.50px 'Liberation Sans',sans-serif;color:#000;transform:scaleX(0.8244);">1</span>
<div class="b" style="left:417.60px;top:762.60px;width:58.60px;height:22.60px;background:#fff;border:1px solid #b4b4b4;box-shadow:0 0 0 1px #e2e2e2"></div>
<span class="t" style="left:422.00px;top:767.52px;font:normal 14.50px/14.50px 'Liberation Sans',sans-serif;color:#000;transform:scaleX(0.9812);">0</span>
<div class="b" style="left:477.60px;top:762.60px;width:58.80px;height:22.60px;background:#fff;border:1px solid #b4b4b4;box-shadow:0 0 0 1px #e2e2e2"></div>
<span class="t" style="left:481.70px;top:767.52px;font:normal 14.50px/14.50px 'Liberation Sans',sans-serif;color:#000;transform:scaleX(0.8244);">1</span>
<div class="b" style="left:550.30px;top:762.40px;width:23.00px;height:22.60px;background:#fff"></div>
<span class="t" style="left:552.06px;top:765.11px;font:normal 14.30px/14.30px 'Liberation Sans',sans-serif;color:#000;transform:scaleX(1.0817);">0d</span>
<div class="b" style="left:582.00px;top:762.10px;width:150.00px;height:29.30px;background:#fff;border:1px solid #000;border-top-width:1.5px;border-left-width:1.5px"></div>
<span class="t" style="left:585.59px;top:766.71px;font:normal 14.30px/14.30px 'Liberation Sans',sans-serif;color:#000;transform:scaleX(0.9892);">6665</span>
<span class="t" style="left:893.20px;top:649.06px;font:normal 14.20px/14.20px 'Liberation Sans',sans-serif;color:#000;transform:scaleX(0.9842);">Address</span>
<span class="t" style="left:1023.36px;top:649.06px;font:normal 14.20px/14.20px 'Liberation Sans',sans-serif;color:#000;transform:scaleX(1.0072);">DataType</span>
<span class="t" style="left:1107.71px;top:649.06px;font:normal 14.20px/14.20px 'Liberation Sans',sans-serif;color:#000;transform:scaleX(0.9244);">Scale</span>
<span class="t" style="left:1160.33px;top:649.06px;font:normal 14.20px/14.20px 'Liberation Sans',sans-serif;color:#000;transform:scaleX(1.0563);">Offset</span>
<span class="t" style="left:1230.28px;top:649.06px;font:normal 14.20px/14.20px 'Liberation Sans',sans-serif;color:#000;transform:scaleX(1.0211);">Gain</span>
<span class="t" style="left:1329.50px;top:649.06px;font:normal 14.20px/14.20px 'Liberation Sans',sans-serif;color:#000;transform:scaleX(1.0246);">Value</span>
<div class="b" style="left:1282.00px;top:669.50px;width:30.00px;height:119.00px;background:#b4b4b4"></div>
<span class="t" style="left:753.63px;top:675.78px;font:normal 15.60px/15.60px 'Liberation Sans',sans-serif;color:#000;transform:scaleX(1.0796);">5</span>
<div class="b" style="left:774.40px;top:676.40px;width:16.40px;height:16.40px;background:#fff;border:1.4px solid #3c3c3c"><svg class="b" style="left:0;top:0" width="14" height="14" viewBox="0 0 14 14"><path d="M1.6 7.2L5.2 10.8L12.2 3.4" fill="none" stroke="#333" stroke-width="1.6"/></svg></div>
<div class="b" style="left:802.50px;top:669.70px;width:29.50px;height:29.00px;background:#a6a6a6;border:1px solid #777;border-right:2px solid #5c5c5c;border-bottom:2px solid #5c5c5c;border-top-color:#d0d0d0;border-left-color:#b4b4b4"></div>
<div class="b" style="left:805.00px;top:672.70px;width:23.40px;height:22.60px;background:#ff00ff"></div>
<div class="b" style="left:835.70px;top:672.30px;width:193.60px;height:23.80px;background:#fff;border:1px solid #b0b0b0;box-shadow:0 0 0 1px #e4e4e4"></div>
<div class="b dd" style="left:1008.30px;top:674.10px;width:19.60px;height:19.80px;"><svg class="b" style="left:-1px;top:-1px" width="19" height="19"><path d="M5.3 9.3L9.8 13.8L14.3 9.3" fill="none" stroke="#444" stroke-width="1.2"/></svg></div>
<span class="t" style="left:841.84px;top:676.82px;font:normal 14.50px/14.50px 'Liberation Sans',sans-serif;color:#000;transform:scaleX(1.0038);">Output current (A rms)</span>
<div class="b" style="left:1029.80px;top:672.30px;width:61.80px;height:23.80px;background:#fff;border:1px solid #b0b0b0;box-shadow:0 0 0 1px #e4e4e4"></div>
<div class="b dd" style="left:1068.20px;top:674.10px;width:20.80px;height:19.80px;"><svg class="b" style="left:-1px;top:-1px" width="20" height="19"><path d="M5.9 9.3L10.4 13.8L14.9 9.3" fill="none" stroke="#444" stroke-width="1.2"/></svg></div>
<span class="t" style="left:1034.08px;top:676.82px;font:normal 14.50px/14.50px 'Liberation Sans',sans-serif;color:#000;transform:scaleX(0.9418);">U16</span>
<div class="b" style="left:1092.60px;top:672.30px;width:58.60px;height:22.60px;background:#fff;border:1px solid #b4b4b4;box-shadow:0 0 0 1px #e2e2e2"></div>
<span class="t" style="left:1096.75px;top:676.92px;font:normal 14.50px/14.50px 'Liberation Sans',sans-serif;color:#000;transform:scaleX(1.0345);">2</span>
<div class="b" style="left:1152.60px;top:672.30px;width:58.60px;height:22.60px;background:#fff;border:1px solid #b4b4b4;box-shadow:0 0 0 1px #e2e2e2"></div>
<span class="t" style="left:1157.00px;top:676.92px;font:normal 14.50px/14.50px 'Liberation Sans',sans-serif;color:#000;transform:scaleX(0.9812);">0</span>
<div class="b" style="left:1212.60px;top:672.30px;width:58.80px;height:22.60px;background:#fff;border:1px solid #b4b4b4;box-shadow:0 0 0 1px #e2e2e2"></div>
<span class="t" style="left:1216.70px;top:676.92px;font:normal 14.50px/14.50px 'Liberation Sans',sans-serif;color:#000;transform:scaleX(0.8244);">1</span>
<div class="b" style="left:1285.30px;top:672.10px;width:23.00px;height:22.60px;background:#fff"></div>
<span class="t" style="left:1287.06px;top:674.51px;font:normal 14.30px/14.30px 'Liberation Sans',sans-serif;color:#000;transform:scaleX(1.0817);">0d</span>
<div class="b" style="left:1317.00px;top:667.80px;width:150.00px;height:29.80px;background:#fff;border:1px solid #000;border-top-width:1.5px;border-left-width:1.5px"></div>
<span class="t" style="left:1320.80px;top:672.41px;font:normal 14.30px/14.30px 'Liberation Sans',sans-serif;color:#000;">0</span>
<span class="t" style="left:753.44px;top:705.98px;font:normal 15.60px/15.60px 'Liberation Sans',sans-serif;color:#000;transform:scaleX(1.1028);">6</span>
<div class="b" style="left:775.40px;top:706.60px;width:16.40px;height:16.40px;background:#fff;border:1.4px solid #3c3c3c"><svg class="b" style="left:0;top:0" width="14" height="14" viewBox="0 0 14 14"><path d="M1.6 7.2L5.2 10.8L12.2 3.4" fill="none" stroke="#333" stroke-width="1.6"/></svg></div>
<div class="b" style="left:802.50px;top:699.80px;width:29.50px;height:29.00px;background:#a6a6a6;border:1px solid #777;border-right:2px solid #5c5c5c;border-bottom:2px solid #5c5c5c;border-top-color:#d0d0d0;border-left-color:#b4b4b4"></div>
<div class="b" style="left:805.00px;top:702.80px;width:23.40px;height:22.60px;background:#00ffff"></div>
<div class="b" style="left:835.70px;top:702.40px;width:193.60px;height:23.80px;background:#fff;border:1px solid #b0b0b0;box-shadow:0 0 0 1px #e4e4e4"></div>
<div class="b dd" style="left:1008.30px;top:704.20px;width:19.60px;height:19.80px;"><svg class="b" style="left:-1px;top:-1px" width="19" height="19"><path d="M5.3 9.3L9.8 13.8L14.3 9.3" fill="none" stroke="#444" stroke-width="1.2"/></svg></div>
<span class="t" style="left:841.34px;top:707.02px;font:normal 14.50px/14.50px 'Liberation Sans',sans-serif;color:#000;transform:scaleX(1.0039);">No Selection</span>
<div class="b" style="left:1029.80px;top:702.40px;width:61.80px;height:23.80px;background:#fff;border:1px solid #b0b0b0;box-shadow:0 0 0 1px #e4e4e4"></div>
<div class="b dd" style="left:1068.20px;top:704.20px;width:20.80px;height:19.80px;"><svg class="b" style="left:-1px;top:-1px" width="20" height="19"><path d="M5.9 9.3L10.4 13.8L14.9 9.3" fill="none" stroke="#444" stroke-width="1.2"/></svg></div>
<span class="t" style="left:1034.08px;top:707.02px;font:normal 14.50px/14.50px 'Liberation Sans',sans-serif;color:#000;transform:scaleX(0.9418);">U16</span>
<div class="b" style="left:1092.60px;top:702.40px;width:58.60px;height:22.60px;background:#fff;border:1px solid #b4b4b4;box-shadow:0 0 0 1px #e2e2e2"></div>
<span class="t" style="left:1096.70px;top:707.12px;font:normal 14.50px/14.50px 'Liberation Sans',sans-serif;color:#000;transform:scaleX(0.8244);">1</span>
<div class="b" style="left:1152.60px;top:702.40px;width:58.60px;height:22.60px;background:#fff;border:1px solid #b4b4b4;box-shadow:0 0 0 1px #e2e2e2"></div>
<span class="t" style="left:1157.00px;top:707.12px;font:normal 14.50px/14.50px 'Liberation Sans',sans-serif;color:#000;transform:scaleX(0.9812);">0</span>
<div class="b" style="left:1212.60px;top:702.40px;width:58.80px;height:22.60px;background:#fff;border:1px solid #b4b4b4;box-shadow:0 0 0 1px #e2e2e2"></div>
<span class="t" style="left:1216.70px;top:707.12px;font:normal 14.50px/14.50px 'Liberation Sans',sans-serif;color:#000;transform:scaleX(0.8244);">1</span>
<div class="b" style="left:1285.30px;top:702.20px;width:23.00px;height:22.60px;background:#fff"></div>
<span class="t" style="left:1287.06px;top:704.71px;font:normal 14.30px/14.30px 'Liberation Sans',sans-serif;color:#000;transform:scaleX(1.0817);">0d</span>
<div class="b" style="left:1317.00px;top:699.60px;width:150.00px;height:29.00px;background:#fff;border:1px solid #000;border-top-width:1.5px;border-left-width:1.5px"></div>
<span class="t" style="left:1320.80px;top:704.21px;font:normal 14.30px/14.30px 'Liberation Sans',sans-serif;color:#000;">0</span>
<span class="t" style="left:753.43px;top:736.18px;font:normal 15.60px/15.60px 'Liberation Sans',sans-serif;color:#000;transform:scaleX(1.1148);">7</span>
<div class="b" style="left:775.40px;top:736.80px;width:16.40px;height:16.40px;background:#fff;border:1.4px solid #3c3c3c"><svg class="b" style="left:0;top:0" width="14" height="14" viewBox="0 0 14 14"><path d="M1.6 7.2L5.2 10.8L12.2 3.4" fill="none" stroke="#333" stroke-width="1.6"/></svg></div>
<div class="b" style="left:802.50px;top:729.90px;width:29.50px;height:29.00px;background:#a6a6a6;border:1px solid #777;border-right:2px solid #5c5c5c;border-bottom:2px solid #5c5c5c;border-top-color:#d0d0d0;border-left-color:#b4b4b4"></div>
<div class="b" style="left:805.00px;top:732.90px;width:23.40px;height:22.60px;background:#ff8000"></div>
<div class="b" style="left:835.70px;top:732.50px;width:193.60px;height:23.80px;background:#fff;border:1px solid #b0b0b0;box-shadow:0 0 0 1px #e4e4e4"></div>
<div class="b dd" style="left:1008.30px;top:734.30px;width:19.60px;height:19.80px;"><svg class="b" style="left:-1px;top:-1px" width="19" height="19"><path d="M5.3 9.3L9.8 13.8L14.3 9.3" fill="none" stroke="#444" stroke-width="1.2"/></svg></div>
<span class="t" style="left:841.34px;top:737.22px;font:normal 14.50px/14.50px 'Liberation Sans',sans-serif;color:#000;transform:scaleX(1.0039);">No Selection</span>
<div class="b" style="left:1029.80px;top:732.50px;width:61.80px;height:23.80px;background:#fff;border:1px solid #b0b0b0;box-shadow:0 0 0 1px #e4e4e4"></div>
<div class="b dd" style="left:1068.20px;top:734.30px;width:20.80px;height:19.80px;"><svg class="b" style="left:-1px;top:-1px" width="20" height="19"><path d="M5.9 9.3L10.4 13.8L14.9 9.3" fill="none" stroke="#444" stroke-width="1.2"/></svg></div>
<span class="t" style="left:1034.08px;top:737.22px;font:normal 14.50px/14.50px 'Liberation Sans',sans-serif;color:#000;transform:scaleX(0.9418);">U16</span>
<div class="b" style="left:1092.60px;top:732.50px;width:58.60px;height:22.60px;background:#fff;border:1px solid #b4b4b4;box-shadow:0 0 0 1px #e2e2e2"></div>
<span class="t" style="left:1096.70px;top:737.32px;font:normal 14.50px/14.50px 'Liberation Sans',sans-serif;color:#000;transform:scaleX(0.8244);">1</span>
<div class="b" style="left:1152.60px;top:732.50px;width:58.60px;height:22.60px;background:#fff;border:1px solid #b4b4b4;box-shadow:0 0 0 1px #e2e2e2"></div>
<span class="t" style="left:1157.00px;top:737.32px;font:normal 14.50px/14.50px 'Liberation Sans',sans-serif;color:#000;transform:scaleX(0.9812);">0</span>
<div class="b" style="left:1212.60px;top:732.50px;width:58.80px;height:22.60px;background:#fff;border:1px solid #b4b4b4;box-shadow:0 0 0 1px #e2e2e2"></div>
<span class="t" style="left:1216.70px;top:737.32px;font:normal 14.50px/14.50px 'Liberation Sans',sans-serif;color:#000;transform:scaleX(0.8244);">1</span>
<div class="b" style="left:1285.30px;top:732.30px;width:23.00px;height:22.60px;background:#fff"></div>
<span class="t" style="left:1287.06px;top:734.91px;font:normal 14.30px/14.30px 'Liberation Sans',sans-serif;color:#000;transform:scaleX(1.0817);">0d</span>
<div class="b" style="left:1317.00px;top:730.40px;width:150.00px;height:29.40px;background:#fff;border:1px solid #000;border-top-width:1.5px;border-left-width:1.5px"></div>
<span class="t" style="left:1320.80px;top:735.01px;font:normal 14.30px/14.30px 'Liberation Sans',sans-serif;color:#000;">0</span>
<span class="t" style="left:753.63px;top:766.38px;font:normal 15.60px/15.60px 'Liberation Sans',sans-serif;color:#000;transform:scaleX(1.0796);">8</span>
<div class="b" style="left:775.40px;top:767.00px;width:16.40px;height:16.40px;background:#fff;border:1.4px solid #3c3c3c"><svg class="b" style="left:0;top:0" width="14" height="14" viewBox="0 0 14 14"><path d="M1.6 7.2L5.2 10.8L12.2 3.4" fill="none" stroke="#333" stroke-width="1.6"/></svg></div>
<div class="b" style="left:802.50px;top:760.00px;width:29.50px;height:29.00px;background:#a6a6a6;border:1px solid #777;border-right:2px solid #5c5c5c;border-bottom:2px solid #5c5c5c;border-top-color:#d0d0d0;border-left-color:#b4b4b4"></div>
<div class="b" style="left:805.00px;top:763.00px;width:23.40px;height:22.60px;background:#008000"></div>
<div class="b" style="left:835.70px;top:762.60px;width:193.60px;height:23.80px;background:#fff;border:1px solid #b0b0b0;box-shadow:0 0 0 1px #e4e4e4"></div>
<div class="b dd" style="left:1008.30px;top:764.40px;width:19.60px;height:19.80px;"><svg class="b" style="left:-1px;top:-1px" width="19" height="19"><path d="M5.3 9.3L9.8 13.8L14.3 9.3" fill="none" stroke="#444" stroke-width="1.2"/></svg></div>
<span class="t" style="left:841.34px;top:767.42px;font:normal 14.50px/14.50px 'Liberation Sans',sans-serif;color:#000;transform:scaleX(1.0039);">No Selection</span>
<div class="b" style="left:1029.80px;top:762.60px;width:61.80px;height:23.80px;background:#fff;border:1px solid #b0b0b0;box-shadow:0 0 0 1px #e4e4e4"></div>
<div class="b dd" style="left:1068.20px;top:764.40px;width:20.80px;height:19.80px;"><svg class="b" style="left:-1px;top:-1px" width="20" height="19"><path d="M5.9 9.3L10.4 13.8L14.9 9.3" fill="none" stroke="#444" stroke-width="1.2"/></svg></div>
<span class="t" style="left:1034.08px;top:767.42px;font:normal 14.50px/14.50px 'Liberation Sans',sans-serif;color:#000;transform:scaleX(0.9418);">U16</span>
<div class="b" style="left:1092.60px;top:762.60px;width:58.60px;height:22.60px;background:#fff;border:1px solid #b4b4b4;box-shadow:0 0 0 1px #e2e2e2"></div>
<span class="t" style="left:1096.70px;top:767.52px;font:normal 14.50px/14.50px 'Liberation Sans',sans-serif;color:#000;transform:scaleX(0.8244);">1</span>
<div class="b" style="left:1152.60px;top:762.60px;width:58.60px;height:22.60px;background:#fff;border:1px solid #b4b4b4;box-shadow:0 0 0 1px #e2e2e2"></div>
<span class="t" style="left:1157.00px;top:767.52px;font:normal 14.50px/14.50px 'Liberation Sans',sans-serif;color:#000;transform:scaleX(0.9812);">0</span>
<div class="b" style="left:1212.60px;top:762.60px;width:58.80px;height:22.60px;background:#fff;border:1px solid #b4b4b4;box-shadow:0 0 0 1px #e2e2e2"></div>
<span class="t" style="left:1216.70px;top:767.52px;font:normal 14.50px/14.50px 'Liberation Sans',sans-serif;color:#000;transform:scaleX(0.8244);">1</span>
<div class="b" style="left:1285.30px;top:762.40px;width:23.00px;height:22.60px;background:#fff"></div>
<span class="t" style="left:1287.06px;top:765.11px;font:normal 14.30px/14.30px 'Liberation Sans',sans-serif;color:#000;transform:scaleX(1.0817);">0d</span>
<div class="b" style="left:1317.00px;top:762.10px;width:150.00px;height:29.30px;background:#fff;border:1px solid #000;border-top-width:1.5px;border-left-width:1.5px"></div>
<span class="t" style="left:1320.80px;top:766.71px;font:normal 14.30px/14.30px 'Liberation Sans',sans-serif;color:#000;">0</span>
<div class="b" style="left:1488.00px;top:654.50px;width:120.00px;height:148.00px;background:#f4f4f4;border:1px solid #e2e2e2"></div>
<div class="b" style="left:1493.00px;top:659.00px;width:110.00px;height:140.00px;background:#b4b4b4"></div>
<div class="b" style="left:1493.40px;top:663.00px;width:14.00px;height:14.00px;background:#fff;border:1px solid #000"></div>
<span class="t" style="left:1511.51px;top:663.42px;font:normal 14.50px/14.50px 'Liberation Sans',sans-serif;color:#000;transform:scaleX(1.0299);-webkit-text-stroke:0.25px #000;">None</span>
<div class="b" style="left:1493.40px;top:683.00px;width:14.00px;height:14.00px;background:#fff;border:1px solid #000"></div>
<span class="t" style="left:1512.31px;top:683.39px;font:normal 14.50px/14.50px 'Liberation Sans',sans-serif;color:#000;transform:scaleX(0.8882);-webkit-text-stroke:0.25px #000;">Zoom X,Y</span>
<div class="b" style="left:1493.40px;top:703.00px;width:14.00px;height:14.00px;background:#fff;border:1px solid #000"><svg class="b" style="left:0;top:0" width="12" height="12"><path d="M0 0L12 12M12 0L0 12" stroke="#000" stroke-width="1.1"/></svg></div>
<span class="t" style="left:1512.30px;top:703.36px;font:normal 14.50px/14.50px 'Liberation Sans',sans-serif;color:#000;transform:scaleX(0.9202);-webkit-text-stroke:0.25px #000;">Zoom X</span>
<div class="b" style="left:1493.40px;top:723.00px;width:14.00px;height:14.00px;background:#fff;border:1px solid #000"></div>
<span class="t" style="left:1512.31px;top:723.33px;font:normal 14.50px/14.50px 'Liberation Sans',sans-serif;color:#000;transform:scaleX(0.9068);-webkit-text-stroke:0.25px #000;">Zoom Y</span>
<div class="b" style="left:1493.40px;top:743.00px;width:14.00px;height:14.00px;background:#fff;border:1px solid #000"></div>
<span class="t" style="left:1512.27px;top:743.30px;font:normal 14.50px/14.50px 'Liberation Sans',sans-serif;color:#000;transform:scaleX(0.9800);-webkit-text-stroke:0.25px #000;">Zoom In</span>
<div class="b" style="left:1493.40px;top:763.00px;width:14.00px;height:14.00px;background:#fff;border:1px solid #000"></div>
<span class="t" style="left:1512.27px;top:763.27px;font:normal 14.50px/14.50px 'Liberation Sans',sans-serif;color:#000;-webkit-text-stroke:0.25px #000;">Zoom Out</span>
<div class="b" style="left:1493.40px;top:783.00px;width:14.00px;height:14.00px;background:#fff;border:1px solid #000"></div>
<span class="t" style="left:1511.53px;top:783.24px;font:normal 14.50px/14.50px 'Liberation Sans',sans-serif;color:#000;transform:scaleX(1.0115);-webkit-text-stroke:0.25px #000;">Drag</span>
<div class="b" style="left:18.80px;top:804.20px;width:599.00px;height:74.60px;border-left:1px solid #cfcfcf;border-top:1px solid #cfcfcf;border-right:2px solid #6c6c6c;border-bottom:2px solid #6c6c6c"><div class="b" style="left:0.00px;top:0.00px;width:596.00px;height:71.60px;border-left:2px solid #828282;border-top:2px solid #828282;border-right:1.6px solid #c2c2c2;border-bottom:1.6px solid #c2c2c2;box-shadow:inset 1px 1px 0 #fbfbfb"></div></div>
<div class="b" style="left:633.50px;top:804.20px;width:464.80px;height:74.60px;border-left:1px solid #cfcfcf;border-top:1px solid #cfcfcf;border-right:2px solid #6c6c6c;border-bottom:2px solid #6c6c6c"><div class="b" style="left:0.00px;top:0.00px;width:461.80px;height:71.60px;border-left:2px solid #828282;border-top:2px solid #828282;border-right:1.6px solid #c2c2c2;border-bottom:1.6px solid #c2c2c2;box-shadow:inset 1px 1px 0 #fbfbfb"></div></div>
<div class="b" style="left:1113.20px;top:804.20px;width:494.60px;height:74.60px;border-left:1px solid #cfcfcf;border-top:1px solid #cfcfcf;border-right:2px solid #6c6c6c;border-bottom:2px solid #6c6c6c"><div class="b" style="left:0.00px;top:0.00px;width:491.60px;height:71.60px;border-left:2px solid #828282;border-top:2px solid #828282;border-right:1.6px solid #c2c2c2;border-bottom:1.6px solid #c2c2c2;box-shadow:inset 1px 1px 0 #fbfbfb"></div></div>
<span class="t" style="left:51.29px;top:822.01px;font:normal 14.30px/14.30px 'Liberation Sans',sans-serif;color:#000;">Channel Statistics</span>
<div class="b" style="left:48.50px;top:838.50px;width:119.50px;height:25.10px;background:#fff;border:1px solid #a8a8a8"></div>
<div class="b dd" style="left:144.60px;top:840.60px;width:21.40px;height:21.00px;"><svg class="b" style="left:-1px;top:-1px" width="21" height="21"><path d="M6.2 9.9L10.7 14.4L15.2 9.9" fill="none" stroke="#444" stroke-width="1.2"/></svg></div>
<span class="t" style="left:53.29px;top:843.51px;font:normal 14.30px/14.30px 'Liberation Sans',sans-serif;color:#000;transform:scaleX(0.9867);">Channel 1</span>
<span class="t" style="left:187.36px;top:821.01px;font:normal 14.30px/14.30px 'Liberation Sans',sans-serif;color:#000;">Max</span>
<div class="b" style="left:187.00px;top:837.30px;width:90.20px;height:27.70px;background:#d2d2d2;border-style:solid;border-width:4.6px 5.2px 5.2px 4.8px;border-color:#cbcbcb #fcfcfc #fcfcfc #cdcdcd"></div>
<span class="t" style="left:194.32px;top:844.31px;font:normal 14.30px/14.30px 'Liberation Sans',sans-serif;color:#000;transform:scaleX(0.9500);">7980</span>
<span class="t" style="left:292.36px;top:821.01px;font:normal 14.30px/14.30px 'Liberation Sans',sans-serif;color:#000;">Min</span>
<div class="b" style="left:292.00px;top:837.30px;width:90.20px;height:27.70px;background:#d2d2d2;border-style:solid;border-width:4.6px 5.2px 5.2px 4.8px;border-color:#cbcbcb #fcfcfc #fcfcfc #cdcdcd"></div>
<span class="t" style="left:299.52px;top:844.31px;font:normal 14.30px/14.30px 'Liberation Sans',sans-serif;color:#000;transform:scaleX(0.9500);">0</span>
<span class="t" style="left:398.30px;top:821.01px;font:normal 14.30px/14.30px 'Liberation Sans',sans-serif;color:#000;">Avg</span>
<div class="b" style="left:396.90px;top:837.30px;width:90.20px;height:27.70px;background:#d2d2d2;border-style:solid;border-width:4.6px 5.2px 5.2px 4.8px;border-color:#cbcbcb #fcfcfc #fcfcfc #cdcdcd"></div>
<span class="t" style="left:403.88px;top:844.31px;font:normal 14.30px/14.30px 'Liberation Sans',sans-serif;color:#000;transform:scaleX(0.9500);">1672,01</span>
<span class="t" style="left:503.29px;top:821.01px;font:normal 14.30px/14.30px 'Liberation Sans',sans-serif;color:#000;">˘µY</span>
<div class="b" style="left:501.90px;top:837.30px;width:90.20px;height:27.70px;background:#d2d2d2;border-style:solid;border-width:4.6px 5.2px 5.2px 4.8px;border-color:#cbcbcb #fcfcfc #fcfcfc #cdcdcd"></div>
<span class="t" style="left:509.36px;top:844.31px;font:normal 14.30px/14.30px 'Liberation Sans',sans-serif;color:#000;transform:scaleX(0.9500);">-470</span>
<span class="t" style="left:657.31px;top:817.51px;font:normal 14.30px/14.30px 'Liberation Sans',sans-serif;color:#000;transform:scaleX(0.9700);">Cursor</span>
<span class="t" style="left:657.72px;top:833.81px;font:normal 14.30px/14.30px 'Liberation Sans',sans-serif;color:#000;transform:scaleX(0.9700);">Time</span>
<span class="t" style="left:658.00px;top:850.01px;font:normal 14.30px/14.30px 'Liberation Sans',sans-serif;color:#000;transform:scaleX(0.9700);">A xis</span>
<span class="t" style="left:723.73px;top:822.21px;font:normal 14.30px/14.30px 'Liberation Sans',sans-serif;color:#000;transform:scaleX(0.9339);">Time1 Sec</span>
<div class="b" style="left:723.20px;top:839.20px;width:59.60px;height:23.30px;background:#fff;border:1px solid #b0b0b0;box-shadow:0 0 0 1px #e2e2e2;overflow:hidden"><div class="b" style="left:0.00px;top:0.00px;width:54.60px;height:21.00px;overflow:hidden;position:absolute"><span class="t" style="left:4.18px;top:3.71px;font:normal 14.30px/14.30px 'Liberation Sans',sans-serif;color:#000;transform:scaleX(0.9550);">18,0223</span></div></div>
<span class="t" style="left:813.53px;top:821.21px;font:normal 14.30px/14.30px 'Liberation Sans',sans-serif;color:#000;transform:scaleX(0.9413);">Time2 Sec</span>
<div class="b" style="left:813.30px;top:839.20px;width:59.50px;height:23.30px;background:#f0f0f0;border:1px solid #b0b0b0;box-shadow:0 0 0 1px #e2e2e2;overflow:hidden"><div class="b" style="left:0.00px;top:0.00px;width:54.60px;height:21.00px;overflow:hidden;position:absolute"><span class="t" style="left:4.93px;top:3.71px;font:normal 14.30px/14.30px 'Liberation Sans',sans-serif;color:#000;transform:scaleX(0.9550);">40,0000</span></div></div>
<span class="t" style="left:906.27px;top:822.21px;font:normal 14.30px/14.30px 'Liberation Sans',sans-serif;color:#000;transform:scaleX(0.9411);">˘µTime Sec</span>
<div class="b" style="left:903.20px;top:839.20px;width:59.60px;height:23.30px;background:#f0f0f0;border:1px solid #b0b0b0;box-shadow:0 0 0 1px #e2e2e2;overflow:hidden"><div class="b" style="left:0.00px;top:0.00px;width:54.60px;height:21.00px;overflow:hidden;position:absolute"><span class="t" style="left:4.05px;top:3.71px;font:normal 14.30px/14.30px 'Liberation Sans',sans-serif;color:#000;transform:scaleX(0.9550);">-21,9777</span></div></div>
<span class="t" style="left:995.16px;top:822.21px;font:normal 14.30px/14.30px 'Liberation Sans',sans-serif;color:#000;transform:scaleX(0.9692);">1/˘µTime Sec</span>
<div class="b" style="left:993.00px;top:839.20px;width:59.70px;height:23.30px;background:#f0f0f0;border:1px solid #b0b0b0;box-shadow:0 0 0 1px #e2e2e2;overflow:hidden"><div class="b" style="left:0.00px;top:0.00px;width:54.60px;height:21.00px;overflow:hidden;position:absolute"><span class="t" style="left:4.05px;top:3.71px;font:normal 14.30px/14.30px 'Liberation Sans',sans-serif;color:#000;transform:scaleX(0.9550);">-0,0455</span></div></div>
<span class="t" style="left:1136.78px;top:826.31px;font:normal 14.30px/14.30px 'Liberation Sans',sans-serif;color:#000;transform:scaleX(1.0644);">DI Addr.</span>
<span class="t" style="left:1129.79px;top:852.61px;font:normal 14.30px/14.30px 'Liberation Sans',sans-serif;color:#000;transform:scaleX(1.0570);">DO Addr.</span>
<div class="b" style="left:1194.50px;top:817.30px;width:44.10px;height:26.30px;background:#fff;border:1px solid #e0e0e0"></div>
<div class="b" style="left:1194.50px;top:843.80px;width:44.10px;height:26.00px;background:#fff;border:1px solid #e0e0e0"></div>
<span class="t" style="left:1198.61px;top:822.01px;font:normal 14.30px/14.30px 'Liberation Sans',sans-serif;color:#000;transform:scaleX(0.9597);">2213</span>
<span class="t" style="left:1198.62px;top:848.51px;font:normal 14.30px/14.30px 'Liberation Sans',sans-serif;color:#000;transform:scaleX(0.9530);">2214</span>
<div class="b" style="left:1239.00px;top:817.30px;width:84.50px;height:23.50px;background:#b4b4b4;border:2px solid #8a8a8a;border-right-color:#d8d8d8;border-bottom-color:#d8d8d8"></div>
<div class="b" style="left:1242.50px;top:820.20px;width:18.60px;height:16.50px;background:#a8a8a8;border:1.5px solid #8c8c8c;border-right-color:#d2d2d2;border-bottom-color:#d2d2d2"></div>
<div class="b" style="left:1245.30px;top:823.00px;width:13.00px;height:10.90px;background:radial-gradient(circle at 24% 22%,rgba(255,255,255,.32) 0,rgba(255,255,255,0) 22%),linear-gradient(135deg,#2f6414 0,#214a0c 45%,#122e04 100%)"></div>
<div class="b" style="left:1262.35px;top:820.20px;width:18.60px;height:16.50px;background:#a8a8a8;border:1.5px solid #8c8c8c;border-right-color:#d2d2d2;border-bottom-color:#d2d2d2"></div>
<div class="b" style="left:1265.15px;top:823.00px;width:13.00px;height:10.90px;background:radial-gradient(circle at 24% 22%,rgba(255,255,255,.32) 0,rgba(255,255,255,0) 22%),linear-gradient(135deg,#2f6414 0,#214a0c 45%,#122e04 100%)"></div>
<div class="b" style="left:1282.20px;top:820.20px;width:18.60px;height:16.50px;background:#a8a8a8;border:1.5px solid #8c8c8c;border-right-color:#d2d2d2;border-bottom-color:#d2d2d2"></div>
<div class="b" style="left:1285.00px;top:823.00px;width:13.00px;height:10.90px;background:radial-gradient(circle at 24% 22%,rgba(255,255,255,.32) 0,rgba(255,255,255,0) 22%),linear-gradient(135deg,#2f6414 0,#214a0c 45%,#122e04 100%)"></div>
<div class="b" style="left:1302.05px;top:820.20px;width:18.60px;height:16.50px;background:#a8a8a8;border:1.5px solid #8c8c8c;border-right-color:#d2d2d2;border-bottom-color:#d2d2d2"></div>
<div class="b" style="left:1304.85px;top:823.00px;width:13.00px;height:10.90px;background:radial-gradient(circle at 24% 22%,rgba(255,255,255,.32) 0,rgba(255,255,255,0) 22%),linear-gradient(135deg,#2f6414 0,#214a0c 45%,#122e04 100%)"></div>
<div class="b" style="left:1324.00px;top:817.30px;width:85.80px;height:23.50px;background:#b4b4b4;border:2px solid #8a8a8a;border-right-color:#d8d8d8;border-bottom-color:#d8d8d8"></div>
<div class="b" style="left:1327.50px;top:820.20px;width:18.60px;height:16.50px;background:#a8a8a8;border:1.5px solid #8c8c8c;border-right-color:#d2d2d2;border-bottom-color:#d2d2d2"></div>
<div class="b" style="left:1330.30px;top:823.00px;width:13.00px;height:10.90px;background:radial-gradient(circle at 24% 22%,rgba(255,255,255,.32) 0,rgba(255,255,255,0) 22%),linear-gradient(135deg,#2f6414 0,#214a0c 45%,#122e04 100%)"></div>
<div class="b" style="left:1347.35px;top:820.20px;width:18.60px;height:16.50px;background:#a8a8a8;border:1.5px solid #8c8c8c;border-right-color:#d2d2d2;border-bottom-color:#d2d2d2"></div>
<div class="b" style="left:1350.15px;top:823.00px;width:13.00px;height:10.90px;background:radial-gradient(circle at 24% 22%,rgba(255,255,255,.32) 0,rgba(255,255,255,0) 22%),linear-gradient(135deg,#2f6414 0,#214a0c 45%,#122e04 100%)"></div>
<div class="b" style="left:1367.20px;top:820.20px;width:18.60px;height:16.50px;background:#a8a8a8;border:1.5px solid #8c8c8c;border-right-color:#d2d2d2;border-bottom-color:#d2d2d2"></div>
<div class="b" style="left:1370.00px;top:823.00px;width:13.00px;height:10.90px;background:radial-gradient(circle at 24% 22%,rgba(255,255,255,.32) 0,rgba(255,255,255,0) 22%),linear-gradient(135deg,#2f6414 0,#214a0c 45%,#122e04 100%)"></div>
<div class="b" style="left:1387.05px;top:820.20px;width:18.60px;height:16.50px;background:#a8a8a8;border:1.5px solid #8c8c8c;border-right-color:#d2d2d2;border-bottom-color:#d2d2d2"></div>
<div class="b" style="left:1389.85px;top:823.00px;width:13.00px;height:10.90px;background:radial-gradient(circle at 24% 22%,rgba(255,255,255,.32) 0,rgba(255,255,255,0) 22%),linear-gradient(135deg,#2f6414 0,#214a0c 45%,#122e04 100%)"></div>
<div class="b" style="left:1411.80px;top:817.30px;width:83.70px;height:23.50px;background:#b4b4b4;border:2px solid #8a8a8a;border-right-color:#d8d8d8;border-bottom-color:#d8d8d8"></div>
<div class="b" style="left:1415.30px;top:820.20px;width:18.60px;height:16.50px;background:#a8a8a8;border:1.5px solid #8c8c8c;border-right-color:#d2d2d2;border-bottom-color:#d2d2d2"></div>
<div class="b" style="left:1418.10px;top:823.00px;width:13.00px;height:10.90px;background:radial-gradient(circle at 24% 22%,rgba(255,255,255,.32) 0,rgba(255,255,255,0) 22%),linear-gradient(135deg,#2f6414 0,#214a0c 45%,#122e04 100%)"></div>
<div class="b" style="left:1435.15px;top:820.20px;width:18.60px;height:16.50px;background:#a8a8a8;border:1.5px solid #8c8c8c;border-right-color:#d2d2d2;border-bottom-color:#d2d2d2"></div>
<div class="b" style="left:1437.95px;top:823.00px;width:13.00px;height:10.90px;background:radial-gradient(circle at 24% 22%,rgba(255,255,255,.32) 0,rgba(255,255,255,0) 22%),linear-gradient(135deg,#2f6414 0,#214a0c 45%,#122e04 100%)"></div>
<div class="b" style="left:1455.00px;top:820.20px;width:18.60px;height:16.50px;background:#a8a8a8;border:1.5px solid #8c8c8c;border-right-color:#d2d2d2;border-bottom-color:#d2d2d2"></div>
<div class="b" style="left:1457.80px;top:823.00px;width:13.00px;height:10.90px;background:radial-gradient(circle at 24% 22%,rgba(255,255,255,.32) 0,rgba(255,255,255,0) 22%),linear-gradient(135deg,#2f6414 0,#214a0c 45%,#122e04 100%)"></div>
<div class="b" style="left:1474.85px;top:820.20px;width:18.60px;height:16.50px;background:#a8a8a8;border:1.5px solid #8c8c8c;border-right-color:#d2d2d2;border-bottom-color:#d2d2d2"></div>
<div class="b" style="left:1477.65px;top:823.00px;width:13.00px;height:10.90px;background:radial-gradient(circle at 24% 22%,rgba(255,255,255,.32) 0,rgba(255,255,255,0) 22%),linear-gradient(135deg,#2f6414 0,#214a0c 45%,#122e04 100%)"></div>
<div class="b" style="left:1497.00px;top:817.30px;width:86.00px;height:23.50px;background:#b4b4b4;border:2px solid #8a8a8a;border-right-color:#d8d8d8;border-bottom-color:#d8d8d8"></div>
<div class="b" style="left:1500.50px;top:820.20px;width:18.60px;height:16.50px;background:#a8a8a8;border:1.5px solid #8c8c8c;border-right-color:#d2d2d2;border-bottom-color:#d2d2d2"></div>
<div class="b" style="left:1503.30px;top:823.00px;width:13.00px;height:10.90px;background:radial-gradient(circle at 24% 22%,rgba(255,255,255,.32) 0,rgba(255,255,255,0) 22%),linear-gradient(135deg,#2f6414 0,#214a0c 45%,#122e04 100%)"></div>
<div class="b" style="left:1520.35px;top:820.20px;width:18.60px;height:16.50px;background:#a8a8a8;border:1.5px solid #8c8c8c;border-right-color:#d2d2d2;border-bottom-color:#d2d2d2"></div>
<div class="b" style="left:1523.15px;top:823.00px;width:13.00px;height:10.90px;background:radial-gradient(circle at 24% 22%,rgba(255,255,255,.32) 0,rgba(255,255,255,0) 22%),linear-gradient(135deg,#2f6414 0,#214a0c 45%,#122e04 100%)"></div>
<div class="b" style="left:1540.20px;top:820.20px;width:18.60px;height:16.50px;background:#a8a8a8;border:1.5px solid #8c8c8c;border-right-color:#d2d2d2;border-bottom-color:#d2d2d2"></div>
<div class="b" style="left:1543.00px;top:823.00px;width:13.00px;height:10.90px;background:radial-gradient(circle at 24% 22%,rgba(255,255,255,.32) 0,rgba(255,255,255,0) 22%),linear-gradient(135deg,#2f6414 0,#214a0c 45%,#122e04 100%)"></div>
<div class="b" style="left:1560.05px;top:820.20px;width:18.60px;height:16.50px;background:#a8a8a8;border:1.5px solid #8c8c8c;border-right-color:#d2d2d2;border-bottom-color:#d2d2d2"></div>
<div class="b" style="left:1562.85px;top:823.00px;width:13.00px;height:10.90px;background:radial-gradient(circle at 24% 22%,rgba(255,255,255,.32) 0,rgba(255,255,255,0) 22%),linear-gradient(135deg,#2f6414 0,#214a0c 45%,#122e04 100%)"></div>
<div class="b" style="left:1239.00px;top:844.90px;width:84.50px;height:23.30px;background:#b4b4b4;border:2px solid #8a8a8a;border-right-color:#d8d8d8;border-bottom-color:#d8d8d8"></div>
<div class="b" style="left:1242.50px;top:847.30px;width:18.60px;height:16.50px;background:#a8a8a8;border:1.5px solid #8c8c8c;border-right-color:#d2d2d2;border-bottom-color:#d2d2d2"></div>
<div class="b" style="left:1245.30px;top:850.10px;width:13.00px;height:10.90px;background:radial-gradient(circle at 24% 22%,rgba(255,255,255,.32) 0,rgba(255,255,255,0) 22%),linear-gradient(135deg,#9c1818 0,#7a0e0e 45%,#500606 100%)"></div>
<div class="b" style="left:1262.35px;top:847.30px;width:18.60px;height:16.50px;background:#a8a8a8;border:1.5px solid #8c8c8c;border-right-color:#d2d2d2;border-bottom-color:#d2d2d2"></div>
<div class="b" style="left:1265.15px;top:850.10px;width:13.00px;height:10.90px;background:radial-gradient(circle at 24% 22%,rgba(255,255,255,.32) 0,rgba(255,255,255,0) 22%),linear-gradient(135deg,#9c1818 0,#7a0e0e 45%,#500606 100%)"></div>
<div class="b" style="left:1282.20px;top:847.30px;width:18.60px;height:16.50px;background:#a8a8a8;border:1.5px solid #8c8c8c;border-right-color:#d2d2d2;border-bottom-color:#d2d2d2"></div>
<div class="b" style="left:1285.00px;top:850.10px;width:13.00px;height:10.90px;background:radial-gradient(circle at 24% 22%,rgba(255,255,255,.32) 0,rgba(255,255,255,0) 22%),linear-gradient(135deg,#9c1818 0,#7a0e0e 45%,#500606 100%)"></div>
<div class="b" style="left:1302.05px;top:847.30px;width:18.60px;height:16.50px;background:#a8a8a8;border:1.5px solid #8c8c8c;border-right-color:#d2d2d2;border-bottom-color:#d2d2d2"></div>
<div class="b" style="left:1304.85px;top:850.10px;width:13.00px;height:10.90px;background:radial-gradient(circle at 24% 22%,rgba(255,255,255,.32) 0,rgba(255,255,255,0) 22%),linear-gradient(135deg,#9c1818 0,#7a0e0e 45%,#500606 100%)"></div>
<div class="b" style="left:1324.00px;top:844.90px;width:85.80px;height:23.30px;background:#b4b4b4;border:2px solid #8a8a8a;border-right-color:#d8d8d8;border-bottom-color:#d8d8d8"></div>
<div class="b" style="left:1327.50px;top:847.30px;width:18.60px;height:16.50px;background:#a8a8a8;border:1.5px solid #8c8c8c;border-right-color:#d2d2d2;border-bottom-color:#d2d2d2"></div>
<div class="b" style="left:1330.30px;top:850.10px;width:13.00px;height:10.90px;background:radial-gradient(circle at 24% 22%,rgba(255,255,255,.32) 0,rgba(255,255,255,0) 22%),linear-gradient(135deg,#98183c 0,#74102a 45%,#50081a 100%)"></div>
<div class="b" style="left:1347.35px;top:847.30px;width:18.60px;height:16.50px;background:#a8a8a8;border:1.5px solid #8c8c8c;border-right-color:#d2d2d2;border-bottom-color:#d2d2d2"></div>
<div class="b" style="left:1350.15px;top:850.10px;width:13.00px;height:10.90px;background:radial-gradient(circle at 24% 22%,rgba(255,255,255,.32) 0,rgba(255,255,255,0) 22%),linear-gradient(135deg,#98183c 0,#74102a 45%,#50081a 100%)"></div>
<div class="b" style="left:1367.20px;top:847.30px;width:18.60px;height:16.50px;background:#a8a8a8;border:1.5px solid #8c8c8c;border-right-color:#d2d2d2;border-bottom-color:#d2d2d2"></div>
<div class="b" style="left:1370.00px;top:850.10px;width:13.00px;height:10.90px;background:radial-gradient(circle at 24% 22%,rgba(255,255,255,.32) 0,rgba(255,255,255,0) 22%),linear-gradient(135deg,#98183c 0,#74102a 45%,#50081a 100%)"></div>
<div class="b" style="left:1387.05px;top:847.30px;width:18.60px;height:16.50px;background:#a8a8a8;border:1.5px solid #8c8c8c;border-right-color:#d2d2d2;border-bottom-color:#d2d2d2"></div>
<div class="b" style="left:1389.85px;top:850.10px;width:13.00px;height:10.90px;background:radial-gradient(circle at 24% 22%,rgba(255,255,255,.32) 0,rgba(255,255,255,0) 22%),linear-gradient(135deg,#98183c 0,#74102a 45%,#50081a 100%)"></div>
<div class="b" style="left:1411.80px;top:844.90px;width:83.70px;height:23.30px;background:#b4b4b4;border:2px solid #8a8a8a;border-right-color:#d8d8d8;border-bottom-color:#d8d8d8"></div>
<div class="b" style="left:1415.30px;top:847.30px;width:18.60px;height:16.50px;background:#a8a8a8;border:1.5px solid #8c8c8c;border-right-color:#d2d2d2;border-bottom-color:#d2d2d2"></div>
<div class="b" style="left:1418.10px;top:850.10px;width:13.00px;height:10.90px;background:radial-gradient(circle at 24% 22%,rgba(255,255,255,.32) 0,rgba(255,255,255,0) 22%),linear-gradient(135deg,#98183c 0,#74102a 45%,#50081a 100%)"></div>
<div class="b" style="left:1435.15px;top:847.30px;width:18.60px;height:16.50px;background:#a8a8a8;border:1.5px solid #8c8c8c;border-right-color:#d2d2d2;border-bottom-color:#d2d2d2"></div>
<div class="b" style="left:1437.95px;top:850.10px;width:13.00px;height:10.90px;background:radial-gradient(circle at 24% 22%,rgba(255,255,255,.32) 0,rgba(255,255,255,0) 22%),linear-gradient(135deg,#98183c 0,#74102a 45%,#50081a 100%)"></div>
<div class="b" style="left:1455.00px;top:847.30px;width:18.60px;height:16.50px;background:#a8a8a8;border:1.5px solid #8c8c8c;border-right-color:#d2d2d2;border-bottom-color:#d2d2d2"></div>
<div class="b" style="left:1457.80px;top:850.10px;width:13.00px;height:10.90px;background:radial-gradient(circle at 24% 22%,rgba(255,255,255,.32) 0,rgba(255,255,255,0) 22%),linear-gradient(135deg,#98183c 0,#74102a 45%,#50081a 100%)"></div>
<div class="b" style="left:1474.85px;top:847.30px;width:18.60px;height:16.50px;background:#a8a8a8;border:1.5px solid #8c8c8c;border-right-color:#d2d2d2;border-bottom-color:#d2d2d2"></div>
<div class="b" style="left:1477.65px;top:850.10px;width:13.00px;height:10.90px;background:radial-gradient(circle at 24% 22%,rgba(255,255,255,.32) 0,rgba(255,255,255,0) 22%),linear-gradient(135deg,#98183c 0,#74102a 45%,#50081a 100%)"></div>
<div class="b" style="left:1497.00px;top:844.90px;width:86.00px;height:23.30px;background:#b4b4b4;border:2px solid #8a8a8a;border-right-color:#d8d8d8;border-bottom-color:#d8d8d8"></div>
<div class="b" style="left:1500.50px;top:847.30px;width:18.60px;height:16.50px;background:#a8a8a8;border:1.5px solid #8c8c8c;border-right-color:#d2d2d2;border-bottom-color:#d2d2d2"></div>
<div class="b" style="left:1503.30px;top:850.10px;width:13.00px;height:10.90px;background:radial-gradient(circle at 24% 22%,rgba(255,255,255,.32) 0,rgba(255,255,255,0) 22%),linear-gradient(135deg,#98183c 0,#74102a 45%,#50081a 100%)"></div>
<div class="b" style="left:1520.35px;top:847.30px;width:18.60px;height:16.50px;background:#a8a8a8;border:1.5px solid #8c8c8c;border-right-color:#d2d2d2;border-bottom-color:#d2d2d2"></div>
<div class="b" style="left:1523.15px;top:850.10px;width:13.00px;height:10.90px;background:radial-gradient(circle at 24% 22%,rgba(255,255,255,.32) 0,rgba(255,255,255,0) 22%),linear-gradient(135deg,#98183c 0,#74102a 45%,#50081a 100%)"></div>
<div class="b" style="left:1540.20px;top:847.30px;width:18.60px;height:16.50px;background:#a8a8a8;border:1.5px solid #8c8c8c;border-right-color:#d2d2d2;border-bottom-color:#d2d2d2"></div>
<div class="b" style="left:1543.00px;top:850.10px;width:13.00px;height:10.90px;background:radial-gradient(circle at 24% 22%,rgba(255,255,255,.32) 0,rgba(255,255,255,0) 22%),linear-gradient(135deg,#98183c 0,#74102a 45%,#50081a 100%)"></div>
<div class="b" style="left:1560.05px;top:847.30px;width:18.60px;height:16.50px;background:#a8a8a8;border:1.5px solid #8c8c8c;border-right-color:#d2d2d2;border-bottom-color:#d2d2d2"></div>
<div class="b" style="left:1562.85px;top:850.10px;width:13.00px;height:10.90px;background:radial-gradient(circle at 24% 22%,rgba(255,255,255,.32) 0,rgba(255,255,255,0) 22%),linear-gradient(135deg,#98183c 0,#74102a 45%,#50081a 100%)"></div>
<div class="b" style="left:1530.00px;top:5.00px;width:375.00px;height:588.00px;background:#fff;box-shadow:0 0 3px rgba(0,0,0,0.35),0 4px 16px 2px rgba(0,0,0,0.38)"></div>
<div class="b" style="left:1529.00px;top:5.00px;width:376.00px;height:35.00px;background:#fff;border-top:1px solid #5a5a5a;border-right:1px solid #5a5a5a;border-left:1px solid #5a5a5a"></div>
<svg class="b" style="left:1537px;top:12px" width="20" height="20" viewBox="0 0 20 20"><rect width="20" height="20" fill="#000"/><rect x="0.5" y="0.5" width="19" height="10.5" fill="#a4a4a4" stroke="#0000ff" stroke-width="1.2"/><path d="M1 3.5H19M1 6H19M1 8.5H19M3.5 1V11M6.5 1V11M9.5 1V11M12.5 1V11M15.5 1V11" stroke="#c4c4c4" stroke-width="0.5" opacity="0.8"/><path d="M1.5 9.5L4 6.5L5.2 8.2L11.5 1.8L16.5 7.5L18.8 5.5" fill="none" stroke="#e82020" stroke-width="1.3"/><rect x="1" y="12" width="2.6" height="4" fill="#f00"/><rect x="3.6" y="12" width="2.4" height="4" fill="#00f"/><rect x="6" y="12" width="1.2" height="4" fill="#0cf"/><rect x="7.2" y="12" width="1.6" height="4" fill="#0e3"/><rect x="10.8" y="12" width="3" height="4.2" fill="#ff0"/><rect x="15.8" y="12.2" width="3.2" height="1.4" fill="#0aa"/><rect x="15.8" y="14.8" width="3.2" height="1.4" fill="#0dd"/><rect x="15.8" y="17.2" width="3.2" height="1.6" fill="#0bb"/><rect x="1" y="17.2" width="7.8" height="1.6" fill="#700"/><rect x="9.8" y="17.4" width="5.2" height="1.4" fill="#00a"/></svg>
<span class="t" style="left:1562.25px;top:15.67px;font:normal 14.80px/14.80px 'Liberation Sans',sans-serif;color:#000;transform:scaleX(0.9747);">Parameter</span>
<svg class="b" style="left:1876px;top:16px" width="14" height="14" viewBox="0 0 14 14"><path d="M1 1L13 13M13 1L1 13" stroke="#000" stroke-width="1.15" fill="none"/></svg>
<div class="b" style="left:1530.00px;top:40.00px;width:375.00px;height:25.00px;background:#f0f0f0"></div>
<div class="b" style="left:1530.00px;top:65.00px;width:375.00px;height:1.00px;background:#c8c8c8"></div>
<span class="t" style="left:1538.42px;top:43.97px;font:normal 14.80px/14.80px 'Liberation Sans',sans-serif;color:#000;">File</span>
<span class="t" style="left:1602.28px;top:44.07px;font:normal 14.60px/14.60px 'Liberation Sans',sans-serif;color:#000;transform:scaleX(0.9810);">Copy PR</span>
<span class="t" style="left:1700.00px;top:44.07px;font:normal 14.60px/14.60px 'Liberation Sans',sans-serif;color:#000;">View</span>
<div class="b" style="left:1581.50px;top:44.00px;width:1.00px;height:15.50px;background:#a8a8a8"></div>
<div class="b" style="left:1678.50px;top:44.00px;width:1.00px;height:15.50px;background:#a8a8a8"></div>
<div class="b" style="left:1545.00px;top:83.00px;width:330.00px;height:164.50px;background:#b2b2b2;border:1px solid #1a1a1a"></div>
<div class="b" style="left:1561.00px;top:97.70px;width:299.00px;height:130.30px;background:#adadad;border:1px solid #cdcdcd"></div>
<div class="b" style="left:1567.00px;top:101.00px;width:286.00px;height:67.00px;background:#000"></div>
<div class="b" style="left:1575.00px;top:106.00px;width:85.40px;height:25.20px;border:1px solid #5bdc00"></div>
<span class="t" style="left:1579.17px;top:108.16px;font:normal 22.60px/22.60px 'Liberation Sans',sans-serif;color:#ff1010;transform:scaleX(1.0101);">F</span>
<span class="t" style="left:1599.16px;top:108.16px;font:normal 22.60px/22.60px 'Liberation Sans',sans-serif;color:#fff;transform:scaleX(1.0181);">H</span>
<span class="t" style="left:1619.22px;top:108.16px;font:normal 22.60px/22.60px 'Liberation Sans',sans-serif;color:#fff;transform:scaleX(1.0480);">U</span>
<span class="t" style="left:1641.00px;top:108.16px;font:normal 22.60px/22.60px 'Liberation Sans',sans-serif;color:#fff;transform:scaleX(0.9648);">A</span>
<div class="b" style="left:1666.00px;top:105.30px;width:120.00px;height:29.70px;background:#fff"></div>
<span class="t" style="left:1668.59px;top:108.30px;font:bold 13.60px/13.60px 'Liberation Serif',serif;color:#ff1010;transform:scaleX(1.1215);">266,00</span>
<div class="b" style="left:1790.80px;top:108.70px;width:57.40px;height:52.50px;border:1px solid #b8b8b8"></div>
<div class="b" style="left:1800.00px;top:106.00px;width:34.00px;height:8.00px;background:#000"></div>
<span class="t" style="left:1801.67px;top:102.99px;font:bold 14.20px/14.20px 'Liberation Serif',serif;color:#55e000;transform:scaleX(0.9913);">CAN</span>
<span class="t" style="left:1801.28px;top:120.88px;font:bold 15.40px/15.40px 'Liberation Serif',serif;color:#fff;transform:scaleX(0.9558);">RUN</span>
<span class="t" style="left:1801.28px;top:141.88px;font:bold 15.40px/15.40px 'Liberation Serif',serif;color:#fff;transform:scaleX(0.9386);">ERR</span>
<span class="t" style="left:1573.78px;top:146.68px;font:bold 15.40px/15.40px 'Liberation Serif',serif;color:#fff;transform:scaleX(0.9710);">RUN</span>
<span class="t" style="left:1616.25px;top:146.68px;font:bold 15.40px/15.40px 'Liberation Serif',serif;color:#ff1010;transform:scaleX(0.9792);">STOP</span>
<span class="t" style="left:1663.97px;top:146.68px;font:bold 15.40px/15.40px 'Liberation Serif',serif;color:#fff;transform:scaleX(0.8625);">JOG</span>
<span class="t" style="left:1700.78px;top:146.68px;font:bold 15.40px/15.40px 'Liberation Serif',serif;color:#ff1010;transform:scaleX(0.9726);">FWD</span>
<span class="t" style="left:1745.78px;top:146.68px;font:bold 15.40px/15.40px 'Liberation Serif',serif;color:#fff;transform:scaleX(0.9632);">REV</span>
<div class="b" style="left:1566.30px;top:170.10px;width:94.00px;height:25.80px;background:#3a96ff;border:1.5px solid #3c3c3c;box-shadow:inset 1.5px 1.5px 0 #7cc0ff, inset -2px -2px 0 #1e62b8"></div>
<span class="t" style="left:1596.96px;top:175.69px;font:normal 14.20px/14.20px 'Liberation Serif',serif;color:#101838;transform:scaleX(0.9651);">RUN</span>
<div class="b" style="left:1566.30px;top:198.30px;width:94.00px;height:26.20px;background:#ff0000;border:1.5px solid #3c3c3c;box-shadow:inset 1.5px 1.5px 0 #ff7070, inset -2px -2px 0 #a80000"></div>
<span class="t" style="left:1594.54px;top:204.09px;font:normal 14.20px/14.20px 'Liberation Serif',serif;color:#101838;transform:scaleX(1.0450);">STOP</span>
<div class="b" style="left:1662.70px;top:170.10px;width:93.40px;height:25.80px;background:#f0f0f0;border:1.5px solid #3c3c3c;box-shadow:inset 1.5px 1.5px 0 #fff, inset -2px -2px 0 #8c8c8c"></div>
<span class="t" style="left:1692.14px;top:175.69px;font:normal 14.20px/14.20px 'Liberation Serif',serif;color:#101838;transform:scaleX(1.0107);">FWD</span>
<div class="b" style="left:1662.70px;top:198.30px;width:93.40px;height:26.20px;background:#f0f0f0;border:1.5px solid #3c3c3c;box-shadow:inset 1.5px 1.5px 0 #fff, inset -2px -2px 0 #8c8c8c"></div>
<span class="t" style="left:1694.67px;top:204.09px;font:normal 14.20px/14.20px 'Liberation Serif',serif;color:#101838;transform:scaleX(0.9294);">REV</span>
<div class="b" style="left:1759.00px;top:170.10px;width:93.50px;height:25.80px;background:#f0f0f0;border:1.5px solid #3c3c3c;box-shadow:inset 1.5px 1.5px 0 #fff, inset -2px -2px 0 #8c8c8c"></div>
<span class="t" style="left:1792.23px;top:175.69px;font:normal 14.20px/14.20px 'Liberation Serif',serif;color:#101838;transform:scaleX(0.9469);">JOG</span>
<div class="b" style="left:1759.00px;top:198.90px;width:93.50px;height:26.40px;background:#f0f0f0;border:1.5px solid #3c3c3c;box-shadow:inset 1.5px 1.5px 0 #fff, inset -2px -2px 0 #8c8c8c"></div>
<span class="t" style="left:1783.66px;top:204.79px;font:normal 14.20px/14.20px 'Liberation Serif',serif;color:#101838;transform:scaleX(0.9693);">RESET</span>
<div class="b" style="left:1545.00px;top:263.00px;width:250.00px;height:24.40px;background:#fff;border:1px solid #b4b4b4;box-shadow:0 0 0 1px #ececec"></div>
<span class="t" style="left:1547.88px;top:266.93px;font:normal 11.20px/11.20px 'Liberation Sans',sans-serif;color:#000;transform:scaleX(1.0240);">MOTOR PARAMETER</span>
<div class="b" style="left:1771.50px;top:265.80px;width:20.30px;height:18.60px;background:#e9e9e9;border:1px solid #b0b0b0"><svg class="b" style="left:-1px;top:-1px" width="21" height="19"><path d="M5.8 8L10.2 12.4L14.6 8" fill="none" stroke="#444" stroke-width="1.2"/></svg></div>
<div class="b" style="left:1808.00px;top:264.40px;width:80.60px;height:25.20px;background:#e1e1e1;border:1px solid #adadad"></div>
<span class="t" style="left:1822.03px;top:269.89px;font:normal 14.40px/14.40px 'Liberation Serif',serif;color:#000;transform:scaleX(1.0354);">Load Pr.</span>
<div class="b" style="left:1545.40px;top:302.50px;width:342.60px;height:270.10px;background:#fff;overflow:hidden;border-left:4px solid #e4e4e4;border-top:4px solid #ececec;box-shadow:inset 1px 1px 0 #c8c8c8"></div>
<div class="b" style="left:1549.00px;top:306.00px;width:317.00px;height:266.60px;overflow:hidden"><div class="b" style="left:0.00px;top:1.40px;width:48.00px;height:17.05px;background:linear-gradient(90deg,#fff 0,#fcfcfc calc(100% - 10px),#b8b8b8 100%);border-right:1px solid #8c8c8c;border-bottom:1px solid #8a8a8a;border-left:2px solid #fff"></div><span class="t" style="left:7.26px;top:1.74px;font:normal 12.00px/12.00px 'Liberation Sans',sans-serif;color:#000;transform:scaleX(0.9800);">Pr.NO</span><div class="b" style="left:48.00px;top:1.40px;width:143.00px;height:17.05px;background:linear-gradient(90deg,#fff 0,#fcfcfc calc(100% - 10px),#b8b8b8 100%);border-right:1px solid #8c8c8c;border-bottom:1px solid #8a8a8a;border-left:2px solid #fff"></div><span class="t" style="left:54.46px;top:1.74px;font:normal 12.00px/12.00px 'Liberation Sans',sans-serif;color:#000;transform:scaleX(0.9800);">Parameter Description</span><div class="b" style="left:191.00px;top:1.40px;width:65.00px;height:17.05px;background:linear-gradient(90deg,#fff 0,#fcfcfc calc(100% - 10px),#b8b8b8 100%);border-right:1px solid #8c8c8c;border-bottom:1px solid #8a8a8a;border-left:2px solid #fff"></div><span class="t" style="left:196.86px;top:1.74px;font:normal 12.00px/12.00px 'Liberation Sans',sans-serif;color:#000;transform:scaleX(0.9800);">Default</span><div class="b" style="left:256.00px;top:1.40px;width:61.00px;height:17.05px;background:linear-gradient(90deg,#fff 0,#fcfcfc calc(100% - 10px),#b8b8b8 100%);border-right:1px solid #8c8c8c;border-bottom:1px solid #8a8a8a;border-left:2px solid #fff"></div><span class="t" style="left:262.30px;top:1.74px;font:normal 12.00px/12.00px 'Liberation Sans',sans-serif;color:#000;transform:scaleX(0.9800);">Value</span><div class="b" style="left:0.00px;top:18.45px;width:48.00px;height:19.15px;background:#fff;border-right:1px solid #8c8c8c;border-bottom:1px solid #8c8c8c;border-left:1px solid #8c8c8c;"></div><span class="t" style="left:6.59px;top:20.29px;font:normal 12.00px/12.00px 'Liberation Sans',sans-serif;color:#000;transform:scaleX(0.9800);">05-00</span><div class="b" style="left:48.00px;top:18.45px;width:143.00px;height:19.15px;background:#fff;border-right:1px solid #8c8c8c;border-bottom:1px solid #8c8c8c;"></div><span class="t" style="left:54.70px;top:20.29px;font:normal 12.00px/12.00px 'Liberation Sans',sans-serif;color:#000;transform:scaleX(0.9800);">Auto-Tuning SEL</span><div class="b" style="left:191.00px;top:18.45px;width:65.00px;height:19.15px;background:#fff;border-right:1px solid #8c8c8c;border-bottom:1px solid #8c8c8c;"></div><span class="t" style="left:196.79px;top:20.29px;font:normal 12.00px/12.00px 'Liberation Sans',sans-serif;color:#000;transform:scaleX(0.9800);">0</span><div class="b" style="left:256.00px;top:18.45px;width:61.00px;height:19.15px;background:#fff;border-right:1px solid #8c8c8c;border-bottom:1px solid #8c8c8c;"></div><span class="t" style="left:261.59px;top:20.29px;font:normal 12.00px/12.00px 'Liberation Sans',sans-serif;color:#000;transform:scaleX(0.9800);">0</span><div class="b" style="left:0.00px;top:37.60px;width:48.00px;height:18.80px;background:#fff;border-right:1px solid #8c8c8c;border-bottom:1px solid #8c8c8c;border-left:1px solid #8c8c8c;"></div><span class="t" style="left:6.59px;top:39.44px;font:normal 12.00px/12.00px 'Liberation Sans',sans-serif;color:#000;transform:scaleX(0.9800);">05-01</span><div class="b" style="left:48.00px;top:37.60px;width:143.00px;height:18.80px;background:#fff;border-right:1px solid #8c8c8c;border-bottom:1px solid #8c8c8c;"></div><span class="t" style="left:53.64px;top:39.44px;font:normal 12.00px/12.00px 'Liberation Sans',sans-serif;color:#000;transform:scaleX(0.9800);">IM1 A Rated</span><span class="t" style="left:137.50px;top:39.44px;font:normal 12.00px/12.00px 'Liberation Sans',sans-serif;color:#000;transform:scaleX(0.9800);">Amps</span><div class="b" style="left:191.00px;top:37.60px;width:65.00px;height:18.80px;background:#fff;border-right:1px solid #8c8c8c;border-bottom:1px solid #8c8c8c;"></div><span class="t" style="left:196.61px;top:39.44px;font:normal 12.00px/12.00px 'Liberation Sans',sans-serif;color:#000;transform:scaleX(0.9800);">21,60</span><div class="b" style="left:256.00px;top:37.60px;width:61.00px;height:18.80px;background:#fff;border-right:1px solid #8c8c8c;border-bottom:1px solid #8c8c8c;"></div><span class="t" style="left:261.41px;top:39.44px;font:normal 12.00px/12.00px 'Liberation Sans',sans-serif;color:#ff1010;transform:scaleX(0.9800);">22,00</span><div class="b" style="left:0.00px;top:56.40px;width:48.00px;height:18.70px;background:#fff;border-right:1px solid #8c8c8c;border-bottom:1px solid #8c8c8c;border-left:1px solid #8c8c8c;"></div><span class="t" style="left:6.59px;top:58.24px;font:normal 12.00px/12.00px 'Liberation Sans',sans-serif;color:#000;transform:scaleX(0.9800);">05-02</span><div class="b" style="left:48.00px;top:56.40px;width:143.00px;height:18.70px;background:#fff;border-right:1px solid #8c8c8c;border-bottom:1px solid #8c8c8c;"></div><span class="t" style="left:53.64px;top:58.24px;font:normal 12.00px/12.00px 'Liberation Sans',sans-serif;color:#000;transform:scaleX(0.9800);">IM1 P Rated</span><span class="t" style="left:137.84px;top:58.24px;font:normal 12.00px/12.00px 'Liberation Sans',sans-serif;color:#000;transform:scaleX(0.9800);">kW</span><div class="b" style="left:191.00px;top:56.40px;width:65.00px;height:18.70px;background:#fff;border-right:1px solid #8c8c8c;border-bottom:1px solid #8c8c8c;"></div><span class="t" style="left:196.32px;top:58.24px;font:normal 12.00px/12.00px 'Liberation Sans',sans-serif;color:#000;transform:scaleX(0.9800);">11,00</span><div class="b" style="left:256.00px;top:56.40px;width:61.00px;height:18.70px;background:#fff;border-right:1px solid #8c8c8c;border-bottom:1px solid #8c8c8c;"></div><span class="t" style="left:261.53px;top:58.24px;font:normal 12.00px/12.00px 'Liberation Sans',sans-serif;color:#ff1010;transform:scaleX(0.9800);">5,50</span><div class="b" style="left:0.00px;top:75.10px;width:48.00px;height:18.80px;background:#fff;border-right:1px solid #8c8c8c;border-bottom:1px solid #8c8c8c;border-left:1px solid #8c8c8c;"></div><span class="t" style="left:6.59px;top:76.94px;font:normal 12.00px/12.00px 'Liberation Sans',sans-serif;color:#000;transform:scaleX(0.9800);">05-03</span><div class="b" style="left:48.00px;top:75.10px;width:143.00px;height:18.80px;background:#fff;border-right:1px solid #8c8c8c;border-bottom:1px solid #8c8c8c;"></div><span class="t" style="left:53.64px;top:76.94px;font:normal 12.00px/12.00px 'Liberation Sans',sans-serif;color:#000;transform:scaleX(0.9800);">IM1 RPM Rated</span><span class="t" style="left:147.24px;top:76.94px;font:normal 12.00px/12.00px 'Liberation Sans',sans-serif;color:#000;transform:scaleX(0.9800);">rpm</span><div class="b" style="left:191.00px;top:75.10px;width:65.00px;height:18.80px;background:#fff;border-right:1px solid #8c8c8c;border-bottom:1px solid #8c8c8c;"></div><span class="t" style="left:196.32px;top:76.94px;font:normal 12.00px/12.00px 'Liberation Sans',sans-serif;color:#000;transform:scaleX(0.9800);">1710</span><div class="b" style="left:256.00px;top:75.10px;width:61.00px;height:18.80px;background:#fff;border-right:1px solid #8c8c8c;border-bottom:1px solid #8c8c8c;"></div><span class="t" style="left:261.41px;top:76.94px;font:normal 12.00px/12.00px 'Liberation Sans',sans-serif;color:#ff1010;transform:scaleX(0.9800);">7910</span><div class="b" style="left:0.00px;top:93.90px;width:48.00px;height:18.90px;background:#fff;border-right:1px solid #8c8c8c;border-bottom:1px solid #8c8c8c;border-left:1px solid #8c8c8c;"></div><span class="t" style="left:6.59px;top:95.74px;font:normal 12.00px/12.00px 'Liberation Sans',sans-serif;color:#000;transform:scaleX(0.9800);">05-04</span><div class="b" style="left:48.00px;top:93.90px;width:143.00px;height:18.90px;background:#fff;border-right:1px solid #8c8c8c;border-bottom:1px solid #8c8c8c;"></div><span class="t" style="left:53.64px;top:95.74px;font:normal 12.00px/12.00px 'Liberation Sans',sans-serif;color:#000;transform:scaleX(0.9800);">IM1 Poles</span><div class="b" style="left:191.00px;top:93.90px;width:65.00px;height:18.90px;background:#fff;border-right:1px solid #8c8c8c;border-bottom:1px solid #8c8c8c;"></div><span class="t" style="left:196.96px;top:95.74px;font:normal 12.00px/12.00px 'Liberation Sans',sans-serif;color:#000;transform:scaleX(0.9800);">4</span><div class="b" style="left:256.00px;top:93.90px;width:61.00px;height:18.90px;background:#fff;border-right:1px solid #8c8c8c;border-bottom:1px solid #8c8c8c;"></div><span class="t" style="left:261.76px;top:95.74px;font:normal 12.00px/12.00px 'Liberation Sans',sans-serif;color:#000;transform:scaleX(0.9800);">4</span><div class="b" style="left:0.00px;top:112.80px;width:48.00px;height:19.00px;background:#fff;border-right:1px solid #8c8c8c;border-bottom:1px solid #8c8c8c;border-left:1px solid #8c8c8c;"></div><span class="t" style="left:6.59px;top:114.64px;font:normal 12.00px/12.00px 'Liberation Sans',sans-serif;color:#000;transform:scaleX(0.9800);">05-05</span><div class="b" style="left:48.00px;top:112.80px;width:143.00px;height:19.00px;background:#fff;border-right:1px solid #8c8c8c;border-bottom:1px solid #8c8c8c;"></div><span class="t" style="left:53.64px;top:114.64px;font:normal 12.00px/12.00px 'Liberation Sans',sans-serif;color:#000;transform:scaleX(0.9800);">IM1 No-Load</span><span class="t" style="left:139.40px;top:114.64px;font:normal 12.00px/12.00px 'Liberation Sans',sans-serif;color:#000;transform:scaleX(0.9800);">Amps</span><div class="b" style="left:191.00px;top:112.80px;width:65.00px;height:19.00px;background:#fff;border-right:1px solid #8c8c8c;border-bottom:1px solid #8c8c8c;"></div><span class="t" style="left:196.61px;top:114.64px;font:normal 12.00px/12.00px 'Liberation Sans',sans-serif;color:#000;transform:scaleX(0.9800);">6,88</span><div class="b" style="left:256.00px;top:112.80px;width:61.00px;height:19.00px;background:#fff;border-right:1px solid #8c8c8c;border-bottom:1px solid #8c8c8c;"></div><span class="t" style="left:261.76px;top:114.64px;font:normal 12.00px/12.00px 'Liberation Sans',sans-serif;color:#ff1010;transform:scaleX(0.9800);">4,50</span><div class="b" style="left:0.00px;top:131.80px;width:48.00px;height:18.70px;background:#fff;border-right:1px solid #8c8c8c;border-bottom:1px solid #8c8c8c;border-left:1px solid #8c8c8c;"></div><span class="t" style="left:6.59px;top:133.64px;font:normal 12.00px/12.00px 'Liberation Sans',sans-serif;color:#000;transform:scaleX(0.9800);">05-06</span><div class="b" style="left:48.00px;top:131.80px;width:143.00px;height:18.70px;background:#fff;border-right:1px solid #8c8c8c;border-bottom:1px solid #8c8c8c;"></div><span class="t" style="left:53.64px;top:133.64px;font:normal 12.00px/12.00px 'Liberation Sans',sans-serif;color:#000;transform:scaleX(0.9800);">IM1 Rs</span><span class="t" style="left:129.03px;top:133.64px;font:normal 12.00px/12.00px 'Liberation Sans',sans-serif;color:#000;transform:scaleX(0.9800);">ohm</span><div class="b" style="left:191.00px;top:131.80px;width:65.00px;height:18.70px;background:#fff;border-right:1px solid #8c8c8c;border-bottom:1px solid #8c8c8c;"></div><span class="t" style="left:196.79px;top:133.64px;font:normal 12.00px/12.00px 'Liberation Sans',sans-serif;color:#000;transform:scaleX(0.9800);">0,766</span><div class="b" style="left:256.00px;top:131.80px;width:61.00px;height:18.70px;background:#fff;border-right:1px solid #8c8c8c;border-bottom:1px solid #8c8c8c;"></div><span class="t" style="left:261.41px;top:133.64px;font:normal 12.00px/12.00px 'Liberation Sans',sans-serif;color:#ff1010;transform:scaleX(0.9800);">2,200</span><div class="b" style="left:0.00px;top:150.50px;width:48.00px;height:18.80px;background:#fff;border-right:1px solid #8c8c8c;border-bottom:1px solid #8c8c8c;border-left:1px solid #8c8c8c;"></div><span class="t" style="left:6.59px;top:152.34px;font:normal 12.00px/12.00px 'Liberation Sans',sans-serif;color:#000;transform:scaleX(0.9800);">05-07</span><div class="b" style="left:48.00px;top:150.50px;width:143.00px;height:18.80px;background:#fff;border-right:1px solid #8c8c8c;border-bottom:1px solid #8c8c8c;"></div><span class="t" style="left:53.64px;top:152.34px;font:normal 12.00px/12.00px 'Liberation Sans',sans-serif;color:#000;transform:scaleX(0.9800);">IM1 Rr</span><span class="t" style="left:127.03px;top:152.34px;font:normal 12.00px/12.00px 'Liberation Sans',sans-serif;color:#000;transform:scaleX(0.9800);">ohm</span><div class="b" style="left:191.00px;top:150.50px;width:65.00px;height:18.80px;background:#fff;border-right:1px solid #8c8c8c;border-bottom:1px solid #8c8c8c;"></div><span class="t" style="left:196.79px;top:152.34px;font:normal 12.00px/12.00px 'Liberation Sans',sans-serif;color:#000;transform:scaleX(0.9800);">0,287</span><div class="b" style="left:256.00px;top:150.50px;width:61.00px;height:18.80px;background:#fff;border-right:1px solid #8c8c8c;border-bottom:1px solid #8c8c8c;"></div><span class="t" style="left:261.59px;top:152.34px;font:normal 12.00px/12.00px 'Liberation Sans',sans-serif;color:#ff1010;transform:scaleX(0.9800);">0,080</span><div class="b" style="left:0.00px;top:169.30px;width:48.00px;height:18.70px;background:#fff;border-right:1px solid #8c8c8c;border-bottom:1px solid #8c8c8c;border-left:1px solid #8c8c8c;"></div><span class="t" style="left:6.59px;top:171.14px;font:normal 12.00px/12.00px 'Liberation Sans',sans-serif;color:#000;transform:scaleX(0.9800);">05-08</span><div class="b" style="left:48.00px;top:169.30px;width:143.00px;height:18.70px;background:#fff;border-right:1px solid #8c8c8c;border-bottom:1px solid #8c8c8c;"></div><span class="t" style="left:53.64px;top:171.14px;font:normal 12.00px/12.00px 'Liberation Sans',sans-serif;color:#000;transform:scaleX(0.9800);">IM1 Lm</span><span class="t" style="left:130.24px;top:171.14px;font:normal 12.00px/12.00px 'Liberation Sans',sans-serif;color:#000;transform:scaleX(0.9800);">mH</span><div class="b" style="left:191.00px;top:169.30px;width:65.00px;height:18.70px;background:#fff;border-right:1px solid #8c8c8c;border-bottom:1px solid #8c8c8c;"></div><span class="t" style="left:196.32px;top:171.14px;font:normal 12.00px/12.00px 'Liberation Sans',sans-serif;color:#000;transform:scaleX(0.9800);">176,2</span><div class="b" style="left:256.00px;top:169.30px;width:61.00px;height:18.70px;background:#fff;border-right:1px solid #8c8c8c;border-bottom:1px solid #8c8c8c;"></div><span class="t" style="left:261.41px;top:171.14px;font:normal 12.00px/12.00px 'Liberation Sans',sans-serif;color:#ff1010;transform:scaleX(0.9800);">25,0</span><div class="b" style="left:0.00px;top:188.00px;width:48.00px;height:18.60px;background:#0000ff;border-right:1px solid #8c8c8c;border-bottom:1px solid #8c8c8c;border-left:1px solid #8c8c8c;"></div><span class="t" style="left:6.59px;top:189.84px;font:normal 12.00px/12.00px 'Liberation Sans',sans-serif;color:#fff;transform:scaleX(0.9800);">05-09</span><div class="b" style="left:48.00px;top:188.00px;width:143.00px;height:18.60px;background:#0000ff;border-right:1px solid #8c8c8c;border-bottom:1px solid #8c8c8c;"></div><span class="t" style="left:53.64px;top:189.84px;font:normal 12.00px/12.00px 'Liberation Sans',sans-serif;color:#fff;transform:scaleX(0.9800);">IM1 Lx</span><span class="t" style="left:126.74px;top:189.84px;font:normal 12.00px/12.00px 'Liberation Sans',sans-serif;color:#fff;transform:scaleX(0.9800);">mH</span><div class="b" style="left:191.00px;top:188.00px;width:65.00px;height:18.60px;background:#0000ff;border-right:1px solid #8c8c8c;border-bottom:1px solid #8c8c8c;"></div><span class="t" style="left:196.32px;top:189.84px;font:normal 12.00px/12.00px 'Liberation Sans',sans-serif;color:#fff;transform:scaleX(0.9800);">13,4</span><div class="b" style="left:256.00px;top:188.00px;width:61.00px;height:18.60px;background:#0000ff;border-right:1px solid #8c8c8c;border-bottom:1px solid #8c8c8c;"></div><span class="t" style="left:261.76px;top:189.84px;font:normal 12.00px/12.00px 'Liberation Sans',sans-serif;color:#fff;transform:scaleX(0.9800);">4,0</span><div class="b" style="left:0.00px;top:206.60px;width:48.00px;height:18.60px;background:#fff;border-right:1px solid #8c8c8c;border-bottom:1px solid #8c8c8c;border-left:1px solid #8c8c8c;"></div><span class="t" style="left:6.59px;top:208.44px;font:normal 12.00px/12.00px 'Liberation Sans',sans-serif;color:#000;transform:scaleX(0.9800);">05-10</span><div class="b" style="left:48.00px;top:206.60px;width:143.00px;height:18.60px;background:#fff;border-right:1px solid #8c8c8c;border-bottom:1px solid #8c8c8c;"></div><span class="t" style="left:53.76px;top:208.44px;font:normal 12.00px/12.00px 'Liberation Sans',sans-serif;color:#000;transform:scaleX(0.9800);">Reserved</span><div class="b" style="left:191.00px;top:206.60px;width:65.00px;height:18.60px;background:#fff;border-right:1px solid #8c8c8c;border-bottom:1px solid #8c8c8c;"></div><span class="t" style="left:196.79px;top:208.44px;font:normal 12.00px/12.00px 'Liberation Sans',sans-serif;color:#000;transform:scaleX(0.9800);">0</span><div class="b" style="left:256.00px;top:206.60px;width:61.00px;height:18.60px;background:#fff;border-right:1px solid #8c8c8c;border-bottom:1px solid #8c8c8c;"></div><span class="t" style="left:261.59px;top:208.44px;font:normal 12.00px/12.00px 'Liberation Sans',sans-serif;color:#000;transform:scaleX(0.9800);">0</span><div class="b" style="left:0.00px;top:225.20px;width:48.00px;height:18.80px;background:#fff;border-right:1px solid #8c8c8c;border-bottom:1px solid #8c8c8c;border-left:1px solid #8c8c8c;"></div><span class="t" style="left:6.59px;top:227.04px;font:normal 12.00px/12.00px 'Liberation Sans',sans-serif;color:#000;transform:scaleX(0.9800);">05-11</span><div class="b" style="left:48.00px;top:225.20px;width:143.00px;height:18.80px;background:#fff;border-right:1px solid #8c8c8c;border-bottom:1px solid #8c8c8c;"></div><span class="t" style="left:53.76px;top:227.04px;font:normal 12.00px/12.00px 'Liberation Sans',sans-serif;color:#000;transform:scaleX(0.9800);">Reserved</span><div class="b" style="left:191.00px;top:225.20px;width:65.00px;height:18.80px;background:#fff;border-right:1px solid #8c8c8c;border-bottom:1px solid #8c8c8c;"></div><span class="t" style="left:196.79px;top:227.04px;font:normal 12.00px/12.00px 'Liberation Sans',sans-serif;color:#000;transform:scaleX(0.9800);">0</span><div class="b" style="left:256.00px;top:225.20px;width:61.00px;height:18.80px;background:#fff;border-right:1px solid #8c8c8c;border-bottom:1px solid #8c8c8c;"></div><span class="t" style="left:261.59px;top:227.04px;font:normal 12.00px/12.00px 'Liberation Sans',sans-serif;color:#000;transform:scaleX(0.9800);">0</span><div class="b" style="left:0.00px;top:244.00px;width:48.00px;height:18.90px;background:#fff;border-right:1px solid #8c8c8c;border-bottom:1px solid #8c8c8c;border-left:1px solid #8c8c8c;"></div><span class="t" style="left:6.59px;top:245.84px;font:normal 12.00px/12.00px 'Liberation Sans',sans-serif;color:#000;transform:scaleX(0.9800);">05-12</span><div class="b" style="left:48.00px;top:244.00px;width:143.00px;height:18.90px;background:#fff;border-right:1px solid #8c8c8c;border-bottom:1px solid #8c8c8c;"></div><span class="t" style="left:53.76px;top:245.84px;font:normal 12.00px/12.00px 'Liberation Sans',sans-serif;color:#000;transform:scaleX(0.9800);">Reserved</span><div class="b" style="left:191.00px;top:244.00px;width:65.00px;height:18.90px;background:#fff;border-right:1px solid #8c8c8c;border-bottom:1px solid #8c8c8c;"></div><span class="t" style="left:196.79px;top:245.84px;font:normal 12.00px/12.00px 'Liberation Sans',sans-serif;color:#000;transform:scaleX(0.9800);">0</span><div class="b" style="left:256.00px;top:244.00px;width:61.00px;height:18.90px;background:#fff;border-right:1px solid #8c8c8c;border-bottom:1px solid #8c8c8c;"></div><span class="t" style="left:261.59px;top:245.84px;font:normal 12.00px/12.00px 'Liberation Sans',sans-serif;color:#000;transform:scaleX(0.9800);">0</span><div class="b" style="left:0.00px;top:262.90px;width:48.00px;height:18.80px;background:#fff;border-right:1px solid #8c8c8c;border-bottom:1px solid #8c8c8c;border-left:1px solid #8c8c8c;"></div><span class="t" style="left:6.59px;top:264.34px;font:normal 12.00px/12.00px 'Liberation Sans',sans-serif;color:#000;transform:scaleX(0.9800);">05-13</span><div class="b" style="left:48.00px;top:262.90px;width:143.00px;height:18.80px;background:#fff;border-right:1px solid #8c8c8c;border-bottom:1px solid #8c8c8c;"></div><span class="t" style="left:53.64px;top:264.34px;font:normal 12.00px/12.00px 'Liberation Sans',sans-serif;color:#000;transform:scaleX(0.9800);">IM2 A Rated</span><span class="t" style="left:137.50px;top:264.34px;font:normal 12.00px/12.00px 'Liberation Sans',sans-serif;color:#000;transform:scaleX(0.9800);">Amps</span><div class="b" style="left:191.00px;top:262.90px;width:65.00px;height:18.80px;background:#fff;border-right:1px solid #8c8c8c;border-bottom:1px solid #8c8c8c;"></div><span class="t" style="left:196.61px;top:264.34px;font:normal 12.00px/12.00px 'Liberation Sans',sans-serif;color:#000;transform:scaleX(0.9800);">21,60</span><div class="b" style="left:256.00px;top:262.90px;width:61.00px;height:18.80px;background:#fff;border-right:1px solid #8c8c8c;border-bottom:1px solid #8c8c8c;"></div><span class="t" style="left:261.41px;top:264.34px;font:normal 12.00px/12.00px 'Liberation Sans',sans-serif;color:#000;transform:scaleX(0.9800);">21,60</span></div>
<div class="b" style="left:1866.00px;top:306.50px;width:21.00px;height:266.10px;background:#f0f0f0"></div>
<div class="b" style="left:1866.40px;top:306.80px;width:20.20px;height:19.20px;background:#f4f4f4;border:1px solid #fff;border-right-color:#9a9a9a;border-bottom-color:#9a9a9a"><svg class="b" style="left:4px;top:4px" width="10" height="10"><path d="M0.5 9L5 0.5L9.5 9Z" fill="#000"/></svg></div>
<div class="b" style="left:1866.40px;top:328.00px;width:20.20px;height:28.40px;background:linear-gradient(90deg,#fafafa,#e8e8e8);border:1px solid #fff;border-right:2px solid #8e8e8e;border-bottom:2px solid #8e8e8e"></div>
<div class="b" style="left:1866.40px;top:552.40px;width:20.60px;height:20.40px;background:#f4f4f4;border:1px solid #fff;border-right-color:#9a9a9a;border-bottom-color:#9a9a9a"><svg class="b" style="left:4px;top:5px" width="10" height="10"><path d="M0.5 0.5L5 9L9.5 0.5Z" fill="#000"/></svg></div>
<div class="b" style="left:0;top:0;width:3px;height:912px;background:linear-gradient(#7c7468 0px,#8a8272 40px,#aa9e88 100px,#b0a48c 150px,#9c8e70 228px,#c4b49c 260px,#a09070 300px,#7c6c34 340px,#6a5a22 456px,#84744a 540px,#6a5c28 580px,#4c4418 650px,#665c28 700px,#4a3a20 770px,#54481e 850px,#5c5222 912px)"></div><div class="b" style="left:2px;top:0;width:1px;height:912px;background:rgba(50,42,24,0.5)"></div><div class="b" style="left:3px;top:28px;width:1px;height:884px;background:rgba(255,255,255,0.35)"></div>
</body></html>
